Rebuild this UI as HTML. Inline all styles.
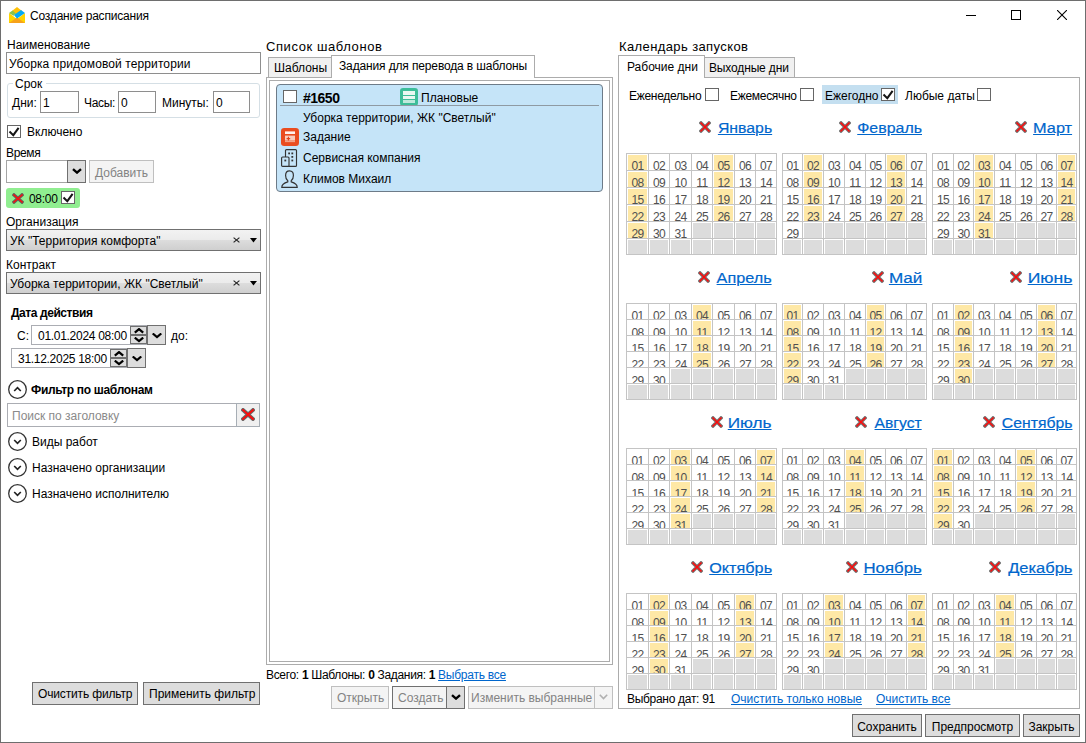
<!DOCTYPE html><html><head><meta charset="utf-8"><style>
*{margin:0;padding:0;box-sizing:border-box}
html,body{width:1086px;height:743px;overflow:hidden;background:#fff}
body{position:relative;font-family:"Liberation Sans",sans-serif;font-size:12px;color:#000}
.t{position:absolute;white-space:nowrap}
.b{position:absolute}
.ab{position:absolute}
.cb{position:absolute;width:14px;height:13px;border:1px solid #666;background:#fff}
.cb svg{position:absolute;left:-1px;top:-1px}
.lnk{color:#0066cc;text-decoration:underline}
.dis{color:#838383}
.bold{font-weight:bold}
.gbtn{position:absolute;background:#dddddd;border:1px solid #707070}
.dbtn{position:absolute;background:#f4f4f4;border:1px solid #bfbfbf}
.cal{position:absolute}
.dn{text-align:center;font-size:12px;line-height:14px;color:#505050;overflow:hidden;padding-top:5px;letter-spacing:-0.6px}
.mh{font-size:15.5px;line-height:17px;transform-origin:100% 50%;-webkit-text-stroke:0.2px #0066cc}
</style></head><body><div class="b" style="left:0px;top:0px;width:1086px;height:743px;border:1px solid #6e6e6e"></div>
<svg class="ab" style="left:9px;top:7px" width="16" height="16" viewBox="0 0 16 16">
<path d="M0 6 L8 12 L16 6 L16 16 L0 16 Z" fill="#ffd400"/>
<path d="M0 16 L8 10.5 L16 16 Z" fill="#f7a21b"/>
<path d="M3 4 L8 0 L13 4 L8 8 Z" fill="#ffc107"/>
<path d="M0 6 L3.5 3.5 L7 6.5 L4.5 8.8 Z" fill="#8bc34a"/>
<path d="M5 8 L12 3 L16 6 L8 11.5 Z" fill="#03a9f4"/>
</svg>
<div class="t " style="left:30px;top:9px;font-size:12px;line-height:14px;letter-spacing:-0.2px;">Создание расписания</div>
<div class="b" style="left:966px;top:15px;width:10px;height:1px;background:#000"></div>
<div class="b" style="left:1011px;top:10px;width:10px;height:10px;border:1px solid #000"></div>
<svg class="ab" style="left:1057px;top:10px" width="10" height="10" viewBox="0 0 10 10"><path d="M0 0 L10 10 M10 0 L0 10" stroke="#000" stroke-width="1.1"/></svg>
<div class="t " style="left:7px;top:38px;font-size:12px;line-height:14px;">Наименование</div>
<div class="b" style="left:6px;top:52px;width:255px;height:22px;border:1px solid #8e8e8e;background:#fff"></div>
<div class="t " style="left:9px;top:57px;font-size:12px;line-height:14px;letter-spacing:0.1px;">Уборка придомовой территории</div>
<div class="b" style="left:7px;top:83px;width:253px;height:35px;border:1px solid #d5dfe5;border-radius:3px"></div>
<div class="b" style="left:13px;top:81px;width:33px;height:4px;background:#fff"></div>
<div class="t " style="left:15px;top:77px;font-size:12px;line-height:14px;">Срок</div>
<div class="t " style="left:12px;top:96px;font-size:12px;line-height:14px;">Дни:</div>
<div class="b" style="left:40px;top:91px;width:39px;height:22px;border:1px solid #8e8e8e;background:#fff"></div>
<div class="t " style="left:43px;top:96px;font-size:12px;line-height:14px;">1</div>
<div class="t " style="left:84px;top:96px;font-size:12px;line-height:14px;letter-spacing:-0.3px;">Часы:</div>
<div class="b" style="left:118px;top:91px;width:38px;height:22px;border:1px solid #8e8e8e;background:#fff"></div>
<div class="t " style="left:121px;top:96px;font-size:12px;line-height:14px;">0</div>
<div class="t " style="left:162px;top:96px;font-size:12px;line-height:14px;">Минуты:</div>
<div class="b" style="left:213px;top:91px;width:37px;height:22px;border:1px solid #8e8e8e;background:#fff"></div>
<div class="t " style="left:216px;top:96px;font-size:12px;line-height:14px;">0</div>
<div class="cb" style="left:7px;top:125px"><svg width="14" height="13" viewBox="0 0 14 13"><path d="M2.5 6.6 L6.3 10.2 L11.6 2.8" fill="none" stroke="#151515" stroke-width="2"/></svg></div>
<div class="t " style="left:27px;top:125px;font-size:12px;line-height:14px;">Включено</div>
<div class="t " style="left:6px;top:146px;font-size:12px;line-height:14px;letter-spacing:-0.35px;">Время</div>
<div class="b" style="left:6px;top:160px;width:80px;height:23px;border:1px solid #a5a5a5;background:#fff"></div>
<div class="b" style="left:67px;top:160px;width:19px;height:23px;border:1px solid #707070;background:#dddddd"></div>
<svg class="ab" style="left:72px;top:168px" width="10" height="6" viewBox="0 0 10 6"><path d="M1 1.2 L5 4.6 L9 1.2" fill="none" stroke="#000" stroke-width="2.4"/></svg>
<div class="dbtn" style="left:89px;top:160px;width:65px;height:23px"></div>
<div class="t dis" style="left:95px;top:166px;font-size:12px;line-height:14px;">Добавить</div>
<div class="b" style="left:6px;top:188px;width:74px;height:20px;background:#90ee90;border-radius:3px"></div>
<svg class="ab" style="left:12px;top:193px" width="12" height="11" viewBox="0 0 12 11"><path d="M2 2 L10 9 M10 2 L2 9" stroke="#5a5a5a" stroke-width="3.5" stroke-linecap="square" opacity="0.9"/><path d="M2 2 L10 9 M10 2 L2 9" stroke="#ff0a0a" stroke-width="1.5" stroke-linecap="square"/></svg>
<div class="t " style="left:29px;top:192px;font-size:12px;line-height:14px;letter-spacing:-0.3px;">08:00</div>
<div class="cb" style="left:61px;top:191px"><svg width="14" height="13" viewBox="0 0 14 13"><path d="M2.5 6.6 L6.3 10.2 L11.6 2.8" fill="none" stroke="#151515" stroke-width="2"/></svg></div>
<div class="t " style="left:6px;top:215px;font-size:12px;line-height:14px;">Организация</div>
<div class="b" style="left:6px;top:229px;width:255px;height:22px;border:1px solid #707070;background:linear-gradient(#f2f2f2 0,#ebebeb 50%,#dddddd 50%,#cfcfcf 100%)"></div>
<div class="t " style="left:10px;top:234px;font-size:12px;line-height:14px;">УК "Территория комфорта"</div>
<svg class="ab" style="left:233px;top:237px" width="7" height="6" viewBox="0 0 7 6"><path d="M0.6 0.6 L6.4 5.4 M6.4 0.6 L0.6 5.4" stroke="#222" stroke-width="1.15"/></svg>
<svg class="ab" style="left:250px;top:238px" width="7" height="5" viewBox="0 0 7 5"><path d="M0 0 L7 0 L3.5 4.5 Z" fill="#000"/></svg>
<div class="t " style="left:6px;top:258px;font-size:12px;line-height:14px;">Контракт</div>
<div class="b" style="left:6px;top:272px;width:255px;height:22px;border:1px solid #707070;background:linear-gradient(#f2f2f2 0,#ebebeb 50%,#dddddd 50%,#cfcfcf 100%)"></div>
<div class="t " style="left:10px;top:277px;font-size:12px;line-height:14px;">Уборка территории, ЖК "Светлый"</div>
<svg class="ab" style="left:233px;top:280px" width="7" height="6" viewBox="0 0 7 6"><path d="M0.6 0.6 L6.4 5.4 M6.4 0.6 L0.6 5.4" stroke="#222" stroke-width="1.15"/></svg>
<svg class="ab" style="left:250px;top:281px" width="7" height="5" viewBox="0 0 7 5"><path d="M0 0 L7 0 L3.5 4.5 Z" fill="#000"/></svg>
<div class="t bold" style="left:11px;top:306px;font-size:12px;line-height:14px;letter-spacing:-0.43px;">Дата действия</div>
<div class="t " style="left:17px;top:329px;font-size:12px;line-height:14px;">С:</div>
<div class="b" style="left:31px;top:325px;width:135px;height:20px;border:1px solid #abadb3;background:#fff"></div>
<div class="t " style="left:38px;top:329px;font-size:12px;line-height:14px;letter-spacing:-0.29px;">01.01.2024 08:00</div>
<div class="b" style="left:130px;top:326px;width:17px;height:18px;border:1px solid #707070;background:#dddddd"></div>
<div class="b" style="left:130px;top:334px;width:17px;height:2px;background:#707070"></div>
<svg class="ab" style="left:133.5px;top:328px" width="10" height="6" viewBox="0 0 10 6"><path d="M0.8 4.6 L5 1.1 L9.2 4.6" fill="none" stroke="#000" stroke-width="2.2"/></svg>
<svg class="ab" style="left:133.5px;top:337px" width="10" height="6" viewBox="0 0 10 6"><path d="M0.8 0.6 L5 4.1 L9.2 0.6" fill="none" stroke="#000" stroke-width="2.2"/></svg>
<div class="b" style="left:147px;top:325px;width:19px;height:20px;border:1px solid #707070;background:#dddddd"></div>
<svg class="ab" style="left:151.5px;top:333px" width="10" height="6" viewBox="0 0 10 6"><path d="M0.7 0.5 L5 4.1 L9.3 0.5" fill="none" stroke="#000" stroke-width="2.2"/></svg>
<div class="t " style="left:171px;top:329px;font-size:12px;line-height:14px;">до:</div>
<div class="b" style="left:11px;top:348px;width:135px;height:20px;border:1px solid #abadb3;background:#fff"></div>
<div class="t " style="left:18px;top:352px;font-size:12px;line-height:14px;letter-spacing:-0.29px;">31.12.2025 18:00</div>
<div class="b" style="left:110px;top:349px;width:17px;height:18px;border:1px solid #707070;background:#dddddd"></div>
<div class="b" style="left:110px;top:357px;width:17px;height:2px;background:#707070"></div>
<svg class="ab" style="left:113.5px;top:351px" width="10" height="6" viewBox="0 0 10 6"><path d="M0.8 4.6 L5 1.1 L9.2 4.6" fill="none" stroke="#000" stroke-width="2.2"/></svg>
<svg class="ab" style="left:113.5px;top:360px" width="10" height="6" viewBox="0 0 10 6"><path d="M0.8 0.6 L5 4.1 L9.2 0.6" fill="none" stroke="#000" stroke-width="2.2"/></svg>
<div class="b" style="left:127px;top:348px;width:19px;height:20px;border:1px solid #707070;background:#dddddd"></div>
<svg class="ab" style="left:131.5px;top:356px" width="10" height="6" viewBox="0 0 10 6"><path d="M0.7 0.5 L5 4.1 L9.3 0.5" fill="none" stroke="#000" stroke-width="2.2"/></svg>
<svg class="ab" style="left:7px;top:379px" width="21" height="21" viewBox="0 0 21 21"><circle cx="10.5" cy="10.5" r="8.8" fill="none" stroke="#333" stroke-width="1.3"/><path d="M7.2 12 L10.5 8.7 L13.8 12" fill="none" stroke="#222" stroke-width="1.7"/></svg>
<div class="t bold" style="left:31px;top:383px;font-size:12px;line-height:14px;letter-spacing:-0.32px;">Фильтр по шаблонам</div>
<div class="b" style="left:7px;top:403px;width:253px;height:24px;border:1px solid #abadb3;background:#fff"></div>
<div class="t " style="left:12px;top:409px;font-size:12px;line-height:14px;color:#8a8a8a">Поиск по заголовку</div>
<div class="b" style="left:236px;top:403px;width:24px;height:24px;border:1px solid #a7aeb5;background:#f0f0f0"></div>
<svg class="ab" style="left:241px;top:408px" width="14" height="13" viewBox="0 0 14 13"><path d="M2 2 L12 11 M12 2 L2 11" stroke="#5a5a5a" stroke-width="3.7" stroke-linecap="square" opacity="0.9"/><path d="M2 2 L12 11 M12 2 L2 11" stroke="#ff0a0a" stroke-width="1.7" stroke-linecap="square"/></svg>
<svg class="ab" style="left:7px;top:431px" width="21" height="21" viewBox="0 0 21 21"><circle cx="10.5" cy="10.5" r="8.8" fill="none" stroke="#333" stroke-width="1.3"/><path d="M7.2 9 L10.5 12.3 L13.8 9" fill="none" stroke="#222" stroke-width="1.7"/></svg>
<div class="t " style="left:32px;top:435px;font-size:12px;line-height:14px;">Виды работ</div>
<svg class="ab" style="left:7px;top:457px" width="21" height="21" viewBox="0 0 21 21"><circle cx="10.5" cy="10.5" r="8.8" fill="none" stroke="#333" stroke-width="1.3"/><path d="M7.2 9 L10.5 12.3 L13.8 9" fill="none" stroke="#222" stroke-width="1.7"/></svg>
<div class="t " style="left:32px;top:461px;font-size:12px;line-height:14px;">Назначено организации</div>
<svg class="ab" style="left:7px;top:483px" width="21" height="21" viewBox="0 0 21 21"><circle cx="10.5" cy="10.5" r="8.8" fill="none" stroke="#333" stroke-width="1.3"/><path d="M7.2 9 L10.5 12.3 L13.8 9" fill="none" stroke="#222" stroke-width="1.7"/></svg>
<div class="t " style="left:32px;top:487px;font-size:12px;line-height:14px;">Назначено исполнителю</div>
<div class="gbtn" style="left:32px;top:682px;width:106px;height:23px"></div>
<div class="t " style="left:38px;top:687px;font-size:12px;line-height:14px;letter-spacing:-0.15px;">Очистить фильтр</div>
<div class="gbtn" style="left:143px;top:682px;width:117px;height:23px"></div>
<div class="t " style="left:149px;top:687px;font-size:12px;line-height:14px;">Применить фильтр</div>
<div class="t " style="left:266px;top:39px;font-size:13px;line-height:15px;letter-spacing:0.59px;">Список шаблонов</div>
<div class="b" style="left:266px;top:77px;width:347px;height:588px;border:1px solid #acacac;background:#fff"></div>
<div class="b" style="left:269px;top:80px;width:341px;height:582px;border:1px solid #acacac"></div>
<div class="b" style="left:268px;top:57px;width:64px;height:21px;border:1px solid #acacac;background:#f0f0f0"></div>
<div class="t " style="left:274px;top:61px;font-size:12px;line-height:14px;">Шаблоны</div>
<div class="b" style="left:331px;top:55px;width:204px;height:23px;border:1px solid #acacac;border-bottom:none;background:#fff"></div>
<div class="t " style="left:339px;top:59px;font-size:12px;line-height:14px;letter-spacing:-0.14px;">Задания для перевода в шаблоны</div>
<div class="b" style="left:276px;top:84px;width:327px;height:108px;border:1px solid #6d7b88;border-radius:4px;background:#c5e4f8"></div>
<div class="cb" style="left:283px;top:90px"></div>
<div class="t bold" style="left:303px;top:90px;font-size:14px;line-height:16px;letter-spacing:-0.5px;">#1650</div>
<svg class="ab" style="left:400px;top:88px" width="18" height="18" viewBox="0 0 18 18">
<rect x="0" y="0" width="18" height="18" rx="3" fill="#3dbd99"/>
<rect x="3" y="3" width="12" height="4" fill="#e9f7f2"/>
<rect x="3" y="8" width="12" height="3" fill="#e9f7f2"/>
<rect x="3" y="12" width="12" height="3" fill="#bfe9dc"/>
</svg>
<div class="t " style="left:421px;top:91px;font-size:12px;line-height:14px;">Плановые</div>
<div class="b" style="left:280px;top:105px;width:319px;height:1px;background:#8f9aa3"></div>
<div class="t " style="left:303px;top:111px;font-size:12px;line-height:14px;">Уборка территории, ЖК "Светлый"</div>
<svg class="ab" style="left:281px;top:128px" width="18" height="18" viewBox="0 0 18 18">
<rect x="0" y="0" width="18" height="18" rx="3.2" fill="#ea4c1f"/>
<rect x="4" y="3.4" width="10" height="2.6" fill="#fff3ee"/>
<rect x="4" y="7.6" width="10" height="5" fill="#f9cdbd"/>
<rect x="4" y="13.2" width="10" height="0.9" fill="#f6b9a2"/>
<path d="M5.6 10.6 H9.2 M7.4 8.8 V12.4" stroke="#e0401a" stroke-width="1.1"/>
</svg>
<div class="t " style="left:303px;top:130px;font-size:12px;line-height:14px;">Задание</div>
<svg class="ab" style="left:281px;top:149px" width="17" height="18" viewBox="0 0 17 18">
<rect x="4.5" y="0.6" width="11" height="16.8" rx="1" fill="none" stroke="#333" stroke-width="1.15"/>
<rect x="0.6" y="8" width="7.4" height="9.4" rx="1" fill="#c5e4f8" stroke="#333" stroke-width="1.15"/>
<rect x="7.2" y="3.5" width="1.8" height="1.8" fill="#333"/>
<rect x="10.4" y="3.5" width="1.8" height="1.8" fill="#333"/>
<rect x="10.4" y="7" width="1.8" height="1.8" fill="#333"/>
<rect x="10.4" y="10.6" width="1.8" height="1.8" fill="#333"/>
<rect x="3.4" y="10.6" width="1.8" height="1.8" fill="#333"/>
</svg>
<div class="t " style="left:303px;top:151px;font-size:12px;line-height:14px;">Сервисная компания</div>
<svg class="ab" style="left:281px;top:170px" width="17" height="18" viewBox="0 0 17 18" fill="none" stroke="#333" stroke-width="1.2">
<path d="M8.5 0.8 C5.6 0.8 4.6 3 4.6 5.4 C4.6 7.8 5.8 10 6.8 10.8 L6.8 11.8 C4 12.6 0.8 13.6 0.8 17.3 L16.2 17.3 C16.2 13.6 13 12.6 10.2 11.8 L10.2 10.8 C11.2 10 12.4 7.8 12.4 5.4 C12.4 3 11.4 0.8 8.5 0.8 Z"/>
</svg>
<div class="t " style="left:303px;top:172px;font-size:12px;line-height:14px;">Климов Михаил</div>
<div class="t " style="left:266px;top:668px;font-size:12px;line-height:14px;letter-spacing:-0.32px;">Всего: <b>1</b> Шаблоны: <b>0</b> Задания: <b>1</b> <span class="lnk" style="letter-spacing:-0.25px">Выбрать все</span></div>
<div class="dbtn" style="left:331px;top:686px;width:58px;height:23px"></div>
<div class="t dis" style="left:337px;top:691px;font-size:12px;line-height:14px;">Открыть</div>
<div class="b" style="left:392px;top:686px;width:73px;height:23px;border:1px solid #707070;background:#f4f4f4"></div>
<div class="t dis" style="left:398px;top:691px;font-size:12px;line-height:14px;">Создать</div>
<div class="b" style="left:446px;top:686px;width:19px;height:23px;border:1px solid #707070;background:#dddddd"></div>
<svg class="ab" style="left:451px;top:694px" width="10" height="6" viewBox="0 0 10 6"><path d="M1 1.2 L5 4.6 L9 1.2" fill="none" stroke="#000" stroke-width="2.4"/></svg>
<div class="dbtn" style="left:468px;top:686px;width:145px;height:23px"></div>
<div class="b" style="left:594px;top:687px;width:1px;height:21px;background:#bfbfbf"></div>
<div class="t dis" style="left:471px;top:691px;font-size:12px;line-height:14px;">Изменить выбранные</div>
<svg class="ab" style="left:599px;top:694px" width="9" height="6" viewBox="0 0 9 6"><path d="M0.8 0.8 L4.5 4.5 L8.2 0.8" fill="none" stroke="#b0b0b0" stroke-width="1.6"/></svg>
<div class="t " style="left:619px;top:39px;font-size:13px;line-height:15px;letter-spacing:0.39px;">Календарь запусков</div>
<div class="b" style="left:618px;top:77px;width:462px;height:632px;border:1px solid #acacac;background:#fff"></div>
<div class="b" style="left:704px;top:57px;width:91px;height:21px;border:1px solid #acacac;background:#f0f0f0"></div>
<div class="t " style="left:709px;top:61px;font-size:12px;line-height:14px;letter-spacing:-0.15px;">Выходные дни</div>
<div class="b" style="left:618px;top:55px;width:87px;height:23px;border:1px solid #acacac;border-bottom:none;background:#fff"></div>
<div class="t " style="left:627px;top:60px;font-size:12px;line-height:14px;">Рабочие дни</div>
<div class="t " style="left:629px;top:89px;font-size:12px;line-height:14px;letter-spacing:-0.3px;">Еженедельно</div>
<div class="cb" style="left:705px;top:88px"></div>
<div class="t " style="left:730px;top:89px;font-size:12px;line-height:14px;letter-spacing:-0.3px;">Ежемесячно</div>
<div class="cb" style="left:800px;top:88px"></div>
<div class="b" style="left:822px;top:85px;width:76px;height:19px;background:#c4dff0"></div>
<div class="t " style="left:825px;top:89px;font-size:12px;line-height:14px;">Ежегодно</div>
<div class="cb" style="left:881px;top:88px"><svg width="14" height="13" viewBox="0 0 14 13"><path d="M2.5 6.6 L6.3 10.2 L11.6 2.8" fill="none" stroke="#151515" stroke-width="2"/></svg></div>
<div class="t " style="left:905px;top:89px;font-size:12px;line-height:14px;">Любые даты</div>
<div class="cb" style="left:977px;top:88px"></div>
<div class="t mh" style="right:314px;top:119px;transform:scaleX(1.021)"><span class="lnk">Январь</span></div>
<svg class="ab" style="left:699.1px;top:121px" width="12" height="12" viewBox="0 0 12 12"><path d="M2 2 L10 10 M10 2 L2 10" stroke="#666" stroke-width="3.4" stroke-linecap="square" opacity="0.9"/><path d="M2 2 L10 10 M10 2 L2 10" stroke="#ff0a0a" stroke-width="1.5" stroke-linecap="square"/></svg>
<div class="cal" style="left:626px;top:153px;width:151px;height:102px"><div class="b" style="left:2px;top:2px;width:19px;height:15px;background:#fee8a6"></div><div class="t dn" style="left:1px;top:1px;width:21px;height:16px;padding-top:5px">01</div><div class="t dn" style="left:23px;top:1px;width:20px;height:16px;padding-top:5px">02</div><div class="t dn" style="left:44px;top:1px;width:21px;height:16px;padding-top:5px">03</div><div class="t dn" style="left:66px;top:1px;width:20px;height:16px;padding-top:5px">04</div><div class="b" style="left:88px;top:2px;width:19px;height:15px;background:#fee8a6"></div><div class="t dn" style="left:87px;top:1px;width:21px;height:16px;padding-top:5px">05</div><div class="t dn" style="left:109px;top:1px;width:20px;height:16px;padding-top:5px">06</div><div class="t dn" style="left:130px;top:1px;width:20px;height:16px;padding-top:5px">07</div><div class="b" style="left:2px;top:19px;width:19px;height:15px;background:#fee8a6"></div><div class="t dn" style="left:1px;top:18px;width:21px;height:16px;padding-top:5px">08</div><div class="t dn" style="left:23px;top:18px;width:20px;height:16px;padding-top:5px">09</div><div class="t dn" style="left:44px;top:18px;width:21px;height:16px;padding-top:5px">10</div><div class="t dn" style="left:66px;top:18px;width:20px;height:16px;padding-top:5px">11</div><div class="b" style="left:88px;top:19px;width:19px;height:15px;background:#fee8a6"></div><div class="t dn" style="left:87px;top:18px;width:21px;height:16px;padding-top:5px">12</div><div class="t dn" style="left:109px;top:18px;width:20px;height:16px;padding-top:5px">13</div><div class="t dn" style="left:130px;top:18px;width:20px;height:16px;padding-top:5px">14</div><div class="b" style="left:2px;top:36px;width:19px;height:15px;background:#fee8a6"></div><div class="t dn" style="left:1px;top:35px;width:21px;height:16px;padding-top:5px">15</div><div class="t dn" style="left:23px;top:35px;width:20px;height:16px;padding-top:5px">16</div><div class="t dn" style="left:44px;top:35px;width:21px;height:16px;padding-top:5px">17</div><div class="t dn" style="left:66px;top:35px;width:20px;height:16px;padding-top:5px">18</div><div class="b" style="left:88px;top:36px;width:19px;height:15px;background:#fee8a6"></div><div class="t dn" style="left:87px;top:35px;width:21px;height:16px;padding-top:5px">19</div><div class="t dn" style="left:109px;top:35px;width:20px;height:16px;padding-top:5px">20</div><div class="t dn" style="left:130px;top:35px;width:20px;height:16px;padding-top:5px">21</div><div class="b" style="left:2px;top:53px;width:19px;height:15px;background:#fee8a6"></div><div class="t dn" style="left:1px;top:52px;width:21px;height:16px;padding-top:5px">22</div><div class="t dn" style="left:23px;top:52px;width:20px;height:16px;padding-top:5px">23</div><div class="t dn" style="left:44px;top:52px;width:21px;height:16px;padding-top:5px">24</div><div class="t dn" style="left:66px;top:52px;width:20px;height:16px;padding-top:5px">25</div><div class="b" style="left:88px;top:53px;width:19px;height:15px;background:#fee8a6"></div><div class="t dn" style="left:87px;top:52px;width:21px;height:16px;padding-top:5px">26</div><div class="t dn" style="left:109px;top:52px;width:20px;height:16px;padding-top:5px">27</div><div class="t dn" style="left:130px;top:52px;width:20px;height:16px;padding-top:5px">28</div><div class="b" style="left:2px;top:70px;width:19px;height:15px;background:#fee8a6"></div><div class="t dn" style="left:1px;top:69px;width:21px;height:16px;padding-top:5px">29</div><div class="t dn" style="left:23px;top:69px;width:20px;height:16px;padding-top:5px">30</div><div class="t dn" style="left:44px;top:69px;width:21px;height:16px;padding-top:5px">31</div><div class="b" style="left:67px;top:70px;width:18px;height:15px;background:#dcdcdc"></div><div class="b" style="left:88px;top:70px;width:19px;height:15px;background:#dcdcdc"></div><div class="b" style="left:110px;top:70px;width:18px;height:15px;background:#dcdcdc"></div><div class="b" style="left:131px;top:70px;width:18px;height:15px;background:#dcdcdc"></div><div class="b" style="left:2px;top:87px;width:19px;height:14px;background:#dcdcdc"></div><div class="b" style="left:24px;top:87px;width:18px;height:14px;background:#dcdcdc"></div><div class="b" style="left:45px;top:87px;width:19px;height:14px;background:#dcdcdc"></div><div class="b" style="left:67px;top:87px;width:18px;height:14px;background:#dcdcdc"></div><div class="b" style="left:88px;top:87px;width:19px;height:14px;background:#dcdcdc"></div><div class="b" style="left:110px;top:87px;width:18px;height:14px;background:#dcdcdc"></div><div class="b" style="left:131px;top:87px;width:18px;height:14px;background:#dcdcdc"></div><div class="b" style="left:0px;top:0;width:1px;height:102px;background:#c4c4c4"></div><div class="b" style="left:22px;top:0;width:1px;height:102px;background:#c4c4c4"></div><div class="b" style="left:43px;top:0;width:1px;height:102px;background:#c4c4c4"></div><div class="b" style="left:65px;top:0;width:1px;height:102px;background:#c4c4c4"></div><div class="b" style="left:86px;top:0;width:1px;height:102px;background:#c4c4c4"></div><div class="b" style="left:108px;top:0;width:1px;height:102px;background:#c4c4c4"></div><div class="b" style="left:129px;top:0;width:1px;height:102px;background:#c4c4c4"></div><div class="b" style="left:150px;top:0;width:1px;height:102px;background:#c4c4c4"></div><div class="b" style="left:0;top:0px;width:151px;height:1px;background:#c4c4c4"></div><div class="b" style="left:0;top:17px;width:151px;height:1px;background:#c4c4c4"></div><div class="b" style="left:0;top:34px;width:151px;height:1px;background:#c4c4c4"></div><div class="b" style="left:0;top:51px;width:151px;height:1px;background:#c4c4c4"></div><div class="b" style="left:0;top:68px;width:151px;height:1px;background:#c4c4c4"></div><div class="b" style="left:0;top:85px;width:151px;height:1px;background:#c4c4c4"></div><div class="b" style="left:0;top:101px;width:151px;height:1px;background:#c4c4c4"></div></div>
<div class="t mh" style="right:164px;top:119px;transform:scaleX(1.028)"><span class="lnk">Февраль</span></div>
<svg class="ab" style="left:838.6px;top:121px" width="12" height="12" viewBox="0 0 12 12"><path d="M2 2 L10 10 M10 2 L2 10" stroke="#666" stroke-width="3.4" stroke-linecap="square" opacity="0.9"/><path d="M2 2 L10 10 M10 2 L2 10" stroke="#ff0a0a" stroke-width="1.5" stroke-linecap="square"/></svg>
<div class="cal" style="left:782px;top:153px;width:145px;height:102px"><div class="t dn" style="left:1px;top:1px;width:19px;height:16px;padding-top:5px">01</div><div class="b" style="left:22px;top:2px;width:18px;height:15px;background:#fee8a6"></div><div class="t dn" style="left:21px;top:1px;width:20px;height:16px;padding-top:5px">02</div><div class="t dn" style="left:42px;top:1px;width:20px;height:16px;padding-top:5px">03</div><div class="t dn" style="left:63px;top:1px;width:20px;height:16px;padding-top:5px">04</div><div class="t dn" style="left:84px;top:1px;width:19px;height:16px;padding-top:5px">05</div><div class="b" style="left:105px;top:2px;width:18px;height:15px;background:#fee8a6"></div><div class="t dn" style="left:104px;top:1px;width:20px;height:16px;padding-top:5px">06</div><div class="t dn" style="left:125px;top:1px;width:19px;height:16px;padding-top:5px">07</div><div class="t dn" style="left:1px;top:18px;width:19px;height:16px;padding-top:5px">08</div><div class="b" style="left:22px;top:19px;width:18px;height:15px;background:#fee8a6"></div><div class="t dn" style="left:21px;top:18px;width:20px;height:16px;padding-top:5px">09</div><div class="t dn" style="left:42px;top:18px;width:20px;height:16px;padding-top:5px">10</div><div class="t dn" style="left:63px;top:18px;width:20px;height:16px;padding-top:5px">11</div><div class="t dn" style="left:84px;top:18px;width:19px;height:16px;padding-top:5px">12</div><div class="b" style="left:105px;top:19px;width:18px;height:15px;background:#fee8a6"></div><div class="t dn" style="left:104px;top:18px;width:20px;height:16px;padding-top:5px">13</div><div class="t dn" style="left:125px;top:18px;width:19px;height:16px;padding-top:5px">14</div><div class="t dn" style="left:1px;top:35px;width:19px;height:16px;padding-top:5px">15</div><div class="b" style="left:22px;top:36px;width:18px;height:15px;background:#fee8a6"></div><div class="t dn" style="left:21px;top:35px;width:20px;height:16px;padding-top:5px">16</div><div class="t dn" style="left:42px;top:35px;width:20px;height:16px;padding-top:5px">17</div><div class="t dn" style="left:63px;top:35px;width:20px;height:16px;padding-top:5px">18</div><div class="t dn" style="left:84px;top:35px;width:19px;height:16px;padding-top:5px">19</div><div class="b" style="left:105px;top:36px;width:18px;height:15px;background:#fee8a6"></div><div class="t dn" style="left:104px;top:35px;width:20px;height:16px;padding-top:5px">20</div><div class="t dn" style="left:125px;top:35px;width:19px;height:16px;padding-top:5px">21</div><div class="t dn" style="left:1px;top:52px;width:19px;height:16px;padding-top:5px">22</div><div class="b" style="left:22px;top:53px;width:18px;height:15px;background:#fee8a6"></div><div class="t dn" style="left:21px;top:52px;width:20px;height:16px;padding-top:5px">23</div><div class="t dn" style="left:42px;top:52px;width:20px;height:16px;padding-top:5px">24</div><div class="t dn" style="left:63px;top:52px;width:20px;height:16px;padding-top:5px">25</div><div class="t dn" style="left:84px;top:52px;width:19px;height:16px;padding-top:5px">26</div><div class="b" style="left:105px;top:53px;width:18px;height:15px;background:#fee8a6"></div><div class="t dn" style="left:104px;top:52px;width:20px;height:16px;padding-top:5px">27</div><div class="t dn" style="left:125px;top:52px;width:19px;height:16px;padding-top:5px">28</div><div class="t dn" style="left:1px;top:69px;width:19px;height:16px;padding-top:5px">29</div><div class="b" style="left:22px;top:70px;width:18px;height:15px;background:#dcdcdc"></div><div class="b" style="left:43px;top:70px;width:18px;height:15px;background:#dcdcdc"></div><div class="b" style="left:64px;top:70px;width:18px;height:15px;background:#dcdcdc"></div><div class="b" style="left:85px;top:70px;width:17px;height:15px;background:#dcdcdc"></div><div class="b" style="left:105px;top:70px;width:18px;height:15px;background:#dcdcdc"></div><div class="b" style="left:126px;top:70px;width:17px;height:15px;background:#dcdcdc"></div><div class="b" style="left:2px;top:87px;width:17px;height:14px;background:#dcdcdc"></div><div class="b" style="left:22px;top:87px;width:18px;height:14px;background:#dcdcdc"></div><div class="b" style="left:43px;top:87px;width:18px;height:14px;background:#dcdcdc"></div><div class="b" style="left:64px;top:87px;width:18px;height:14px;background:#dcdcdc"></div><div class="b" style="left:85px;top:87px;width:17px;height:14px;background:#dcdcdc"></div><div class="b" style="left:105px;top:87px;width:18px;height:14px;background:#dcdcdc"></div><div class="b" style="left:126px;top:87px;width:17px;height:14px;background:#dcdcdc"></div><div class="b" style="left:0px;top:0;width:1px;height:102px;background:#c4c4c4"></div><div class="b" style="left:20px;top:0;width:1px;height:102px;background:#c4c4c4"></div><div class="b" style="left:41px;top:0;width:1px;height:102px;background:#c4c4c4"></div><div class="b" style="left:62px;top:0;width:1px;height:102px;background:#c4c4c4"></div><div class="b" style="left:83px;top:0;width:1px;height:102px;background:#c4c4c4"></div><div class="b" style="left:103px;top:0;width:1px;height:102px;background:#c4c4c4"></div><div class="b" style="left:124px;top:0;width:1px;height:102px;background:#c4c4c4"></div><div class="b" style="left:144px;top:0;width:1px;height:102px;background:#c4c4c4"></div><div class="b" style="left:0;top:0px;width:145px;height:1px;background:#c4c4c4"></div><div class="b" style="left:0;top:17px;width:145px;height:1px;background:#c4c4c4"></div><div class="b" style="left:0;top:34px;width:145px;height:1px;background:#c4c4c4"></div><div class="b" style="left:0;top:51px;width:145px;height:1px;background:#c4c4c4"></div><div class="b" style="left:0;top:68px;width:145px;height:1px;background:#c4c4c4"></div><div class="b" style="left:0;top:85px;width:145px;height:1px;background:#c4c4c4"></div><div class="b" style="left:0;top:101px;width:145px;height:1px;background:#c4c4c4"></div></div>
<div class="t mh" style="right:14px;top:119px;transform:scaleX(1.052)"><span class="lnk">Март</span></div>
<svg class="ab" style="left:1014.5px;top:121px" width="12" height="12" viewBox="0 0 12 12"><path d="M2 2 L10 10 M10 2 L2 10" stroke="#666" stroke-width="3.4" stroke-linecap="square" opacity="0.9"/><path d="M2 2 L10 10 M10 2 L2 10" stroke="#ff0a0a" stroke-width="1.5" stroke-linecap="square"/></svg>
<div class="cal" style="left:932px;top:153px;width:145px;height:102px"><div class="t dn" style="left:1px;top:1px;width:20px;height:16px;padding-top:5px">01</div><div class="t dn" style="left:22px;top:1px;width:19px;height:16px;padding-top:5px">02</div><div class="b" style="left:43px;top:2px;width:18px;height:15px;background:#fee8a6"></div><div class="t dn" style="left:42px;top:1px;width:20px;height:16px;padding-top:5px">03</div><div class="t dn" style="left:63px;top:1px;width:20px;height:16px;padding-top:5px">04</div><div class="t dn" style="left:84px;top:1px;width:20px;height:16px;padding-top:5px">05</div><div class="t dn" style="left:105px;top:1px;width:19px;height:16px;padding-top:5px">06</div><div class="b" style="left:126px;top:2px;width:17px;height:15px;background:#fee8a6"></div><div class="t dn" style="left:125px;top:1px;width:19px;height:16px;padding-top:5px">07</div><div class="t dn" style="left:1px;top:18px;width:20px;height:16px;padding-top:5px">08</div><div class="t dn" style="left:22px;top:18px;width:19px;height:16px;padding-top:5px">09</div><div class="b" style="left:43px;top:19px;width:18px;height:15px;background:#fee8a6"></div><div class="t dn" style="left:42px;top:18px;width:20px;height:16px;padding-top:5px">10</div><div class="t dn" style="left:63px;top:18px;width:20px;height:16px;padding-top:5px">11</div><div class="t dn" style="left:84px;top:18px;width:20px;height:16px;padding-top:5px">12</div><div class="t dn" style="left:105px;top:18px;width:19px;height:16px;padding-top:5px">13</div><div class="b" style="left:126px;top:19px;width:17px;height:15px;background:#fee8a6"></div><div class="t dn" style="left:125px;top:18px;width:19px;height:16px;padding-top:5px">14</div><div class="t dn" style="left:1px;top:35px;width:20px;height:16px;padding-top:5px">15</div><div class="t dn" style="left:22px;top:35px;width:19px;height:16px;padding-top:5px">16</div><div class="b" style="left:43px;top:36px;width:18px;height:15px;background:#fee8a6"></div><div class="t dn" style="left:42px;top:35px;width:20px;height:16px;padding-top:5px">17</div><div class="t dn" style="left:63px;top:35px;width:20px;height:16px;padding-top:5px">18</div><div class="t dn" style="left:84px;top:35px;width:20px;height:16px;padding-top:5px">19</div><div class="t dn" style="left:105px;top:35px;width:19px;height:16px;padding-top:5px">20</div><div class="b" style="left:126px;top:36px;width:17px;height:15px;background:#fee8a6"></div><div class="t dn" style="left:125px;top:35px;width:19px;height:16px;padding-top:5px">21</div><div class="t dn" style="left:1px;top:52px;width:20px;height:16px;padding-top:5px">22</div><div class="t dn" style="left:22px;top:52px;width:19px;height:16px;padding-top:5px">23</div><div class="b" style="left:43px;top:53px;width:18px;height:15px;background:#fee8a6"></div><div class="t dn" style="left:42px;top:52px;width:20px;height:16px;padding-top:5px">24</div><div class="t dn" style="left:63px;top:52px;width:20px;height:16px;padding-top:5px">25</div><div class="t dn" style="left:84px;top:52px;width:20px;height:16px;padding-top:5px">26</div><div class="t dn" style="left:105px;top:52px;width:19px;height:16px;padding-top:5px">27</div><div class="b" style="left:126px;top:53px;width:17px;height:15px;background:#fee8a6"></div><div class="t dn" style="left:125px;top:52px;width:19px;height:16px;padding-top:5px">28</div><div class="t dn" style="left:1px;top:69px;width:20px;height:16px;padding-top:5px">29</div><div class="t dn" style="left:22px;top:69px;width:19px;height:16px;padding-top:5px">30</div><div class="b" style="left:43px;top:70px;width:18px;height:15px;background:#fee8a6"></div><div class="t dn" style="left:42px;top:69px;width:20px;height:16px;padding-top:5px">31</div><div class="b" style="left:64px;top:70px;width:18px;height:15px;background:#dcdcdc"></div><div class="b" style="left:85px;top:70px;width:18px;height:15px;background:#dcdcdc"></div><div class="b" style="left:106px;top:70px;width:17px;height:15px;background:#dcdcdc"></div><div class="b" style="left:126px;top:70px;width:17px;height:15px;background:#dcdcdc"></div><div class="b" style="left:2px;top:87px;width:18px;height:14px;background:#dcdcdc"></div><div class="b" style="left:23px;top:87px;width:17px;height:14px;background:#dcdcdc"></div><div class="b" style="left:43px;top:87px;width:18px;height:14px;background:#dcdcdc"></div><div class="b" style="left:64px;top:87px;width:18px;height:14px;background:#dcdcdc"></div><div class="b" style="left:85px;top:87px;width:18px;height:14px;background:#dcdcdc"></div><div class="b" style="left:106px;top:87px;width:17px;height:14px;background:#dcdcdc"></div><div class="b" style="left:126px;top:87px;width:17px;height:14px;background:#dcdcdc"></div><div class="b" style="left:0px;top:0;width:1px;height:102px;background:#c4c4c4"></div><div class="b" style="left:21px;top:0;width:1px;height:102px;background:#c4c4c4"></div><div class="b" style="left:41px;top:0;width:1px;height:102px;background:#c4c4c4"></div><div class="b" style="left:62px;top:0;width:1px;height:102px;background:#c4c4c4"></div><div class="b" style="left:83px;top:0;width:1px;height:102px;background:#c4c4c4"></div><div class="b" style="left:104px;top:0;width:1px;height:102px;background:#c4c4c4"></div><div class="b" style="left:124px;top:0;width:1px;height:102px;background:#c4c4c4"></div><div class="b" style="left:144px;top:0;width:1px;height:102px;background:#c4c4c4"></div><div class="b" style="left:0;top:0px;width:145px;height:1px;background:#c4c4c4"></div><div class="b" style="left:0;top:17px;width:145px;height:1px;background:#c4c4c4"></div><div class="b" style="left:0;top:34px;width:145px;height:1px;background:#c4c4c4"></div><div class="b" style="left:0;top:51px;width:145px;height:1px;background:#c4c4c4"></div><div class="b" style="left:0;top:68px;width:145px;height:1px;background:#c4c4c4"></div><div class="b" style="left:0;top:85px;width:145px;height:1px;background:#c4c4c4"></div><div class="b" style="left:0;top:101px;width:145px;height:1px;background:#c4c4c4"></div></div>
<div class="t mh" style="right:314px;top:269px;transform:scaleX(1.046)"><span class="lnk">Апрель</span></div>
<svg class="ab" style="left:698.3px;top:271px" width="12" height="12" viewBox="0 0 12 12"><path d="M2 2 L10 10 M10 2 L2 10" stroke="#666" stroke-width="3.4" stroke-linecap="square" opacity="0.9"/><path d="M2 2 L10 10 M10 2 L2 10" stroke="#ff0a0a" stroke-width="1.5" stroke-linecap="square"/></svg>
<div class="cal" style="left:626px;top:303px;width:151px;height:97px"><div class="t dn" style="left:1px;top:1px;width:21px;height:15px;padding-top:5px">01</div><div class="t dn" style="left:23px;top:1px;width:20px;height:15px;padding-top:5px">02</div><div class="t dn" style="left:44px;top:1px;width:21px;height:15px;padding-top:5px">03</div><div class="b" style="left:67px;top:2px;width:18px;height:14px;background:#fee8a6"></div><div class="t dn" style="left:66px;top:1px;width:20px;height:15px;padding-top:5px">04</div><div class="t dn" style="left:87px;top:1px;width:21px;height:15px;padding-top:5px">05</div><div class="t dn" style="left:109px;top:1px;width:20px;height:15px;padding-top:5px">06</div><div class="t dn" style="left:130px;top:1px;width:20px;height:15px;padding-top:5px">07</div><div class="t dn" style="left:1px;top:17px;width:21px;height:15px;padding-top:6px">08</div><div class="t dn" style="left:23px;top:17px;width:20px;height:15px;padding-top:6px">09</div><div class="t dn" style="left:44px;top:17px;width:21px;height:15px;padding-top:6px">10</div><div class="b" style="left:67px;top:18px;width:18px;height:14px;background:#fee8a6"></div><div class="t dn" style="left:66px;top:17px;width:20px;height:15px;padding-top:6px">11</div><div class="t dn" style="left:87px;top:17px;width:21px;height:15px;padding-top:6px">12</div><div class="t dn" style="left:109px;top:17px;width:20px;height:15px;padding-top:6px">13</div><div class="t dn" style="left:130px;top:17px;width:20px;height:15px;padding-top:6px">14</div><div class="t dn" style="left:1px;top:33px;width:21px;height:15px;padding-top:6px">15</div><div class="t dn" style="left:23px;top:33px;width:20px;height:15px;padding-top:6px">16</div><div class="t dn" style="left:44px;top:33px;width:21px;height:15px;padding-top:6px">17</div><div class="b" style="left:67px;top:34px;width:18px;height:14px;background:#fee8a6"></div><div class="t dn" style="left:66px;top:33px;width:20px;height:15px;padding-top:6px">18</div><div class="t dn" style="left:87px;top:33px;width:21px;height:15px;padding-top:6px">19</div><div class="t dn" style="left:109px;top:33px;width:20px;height:15px;padding-top:6px">20</div><div class="t dn" style="left:130px;top:33px;width:20px;height:15px;padding-top:6px">21</div><div class="t dn" style="left:1px;top:49px;width:21px;height:15px;padding-top:6px">22</div><div class="t dn" style="left:23px;top:49px;width:20px;height:15px;padding-top:6px">23</div><div class="t dn" style="left:44px;top:49px;width:21px;height:15px;padding-top:6px">24</div><div class="b" style="left:67px;top:50px;width:18px;height:14px;background:#fee8a6"></div><div class="t dn" style="left:66px;top:49px;width:20px;height:15px;padding-top:6px">25</div><div class="t dn" style="left:87px;top:49px;width:21px;height:15px;padding-top:6px">26</div><div class="t dn" style="left:109px;top:49px;width:20px;height:15px;padding-top:6px">27</div><div class="t dn" style="left:130px;top:49px;width:20px;height:15px;padding-top:6px">28</div><div class="t dn" style="left:1px;top:65px;width:21px;height:15px;padding-top:6px">29</div><div class="t dn" style="left:23px;top:65px;width:20px;height:15px;padding-top:6px">30</div><div class="b" style="left:45px;top:66px;width:19px;height:14px;background:#dcdcdc"></div><div class="b" style="left:67px;top:66px;width:18px;height:14px;background:#dcdcdc"></div><div class="b" style="left:88px;top:66px;width:19px;height:14px;background:#dcdcdc"></div><div class="b" style="left:110px;top:66px;width:18px;height:14px;background:#dcdcdc"></div><div class="b" style="left:131px;top:66px;width:18px;height:14px;background:#dcdcdc"></div><div class="b" style="left:2px;top:82px;width:19px;height:14px;background:#dcdcdc"></div><div class="b" style="left:24px;top:82px;width:18px;height:14px;background:#dcdcdc"></div><div class="b" style="left:45px;top:82px;width:19px;height:14px;background:#dcdcdc"></div><div class="b" style="left:67px;top:82px;width:18px;height:14px;background:#dcdcdc"></div><div class="b" style="left:88px;top:82px;width:19px;height:14px;background:#dcdcdc"></div><div class="b" style="left:110px;top:82px;width:18px;height:14px;background:#dcdcdc"></div><div class="b" style="left:131px;top:82px;width:18px;height:14px;background:#dcdcdc"></div><div class="b" style="left:0px;top:0;width:1px;height:97px;background:#c4c4c4"></div><div class="b" style="left:22px;top:0;width:1px;height:97px;background:#c4c4c4"></div><div class="b" style="left:43px;top:0;width:1px;height:97px;background:#c4c4c4"></div><div class="b" style="left:65px;top:0;width:1px;height:97px;background:#c4c4c4"></div><div class="b" style="left:86px;top:0;width:1px;height:97px;background:#c4c4c4"></div><div class="b" style="left:108px;top:0;width:1px;height:97px;background:#c4c4c4"></div><div class="b" style="left:129px;top:0;width:1px;height:97px;background:#c4c4c4"></div><div class="b" style="left:150px;top:0;width:1px;height:97px;background:#c4c4c4"></div><div class="b" style="left:0;top:0px;width:151px;height:1px;background:#c4c4c4"></div><div class="b" style="left:0;top:16px;width:151px;height:1px;background:#c4c4c4"></div><div class="b" style="left:0;top:32px;width:151px;height:1px;background:#c4c4c4"></div><div class="b" style="left:0;top:48px;width:151px;height:1px;background:#c4c4c4"></div><div class="b" style="left:0;top:64px;width:151px;height:1px;background:#c4c4c4"></div><div class="b" style="left:0;top:80px;width:151px;height:1px;background:#c4c4c4"></div><div class="b" style="left:0;top:96px;width:151px;height:1px;background:#c4c4c4"></div></div>
<div class="t mh" style="right:164px;top:269px;transform:scaleX(1.102)"><span class="lnk">Май</span></div>
<svg class="ab" style="left:871.8px;top:271px" width="12" height="12" viewBox="0 0 12 12"><path d="M2 2 L10 10 M10 2 L2 10" stroke="#666" stroke-width="3.4" stroke-linecap="square" opacity="0.9"/><path d="M2 2 L10 10 M10 2 L2 10" stroke="#ff0a0a" stroke-width="1.5" stroke-linecap="square"/></svg>
<div class="cal" style="left:782px;top:303px;width:145px;height:97px"><div class="b" style="left:2px;top:2px;width:17px;height:14px;background:#fee8a6"></div><div class="t dn" style="left:1px;top:1px;width:19px;height:15px;padding-top:5px">01</div><div class="t dn" style="left:21px;top:1px;width:20px;height:15px;padding-top:5px">02</div><div class="t dn" style="left:42px;top:1px;width:20px;height:15px;padding-top:5px">03</div><div class="t dn" style="left:63px;top:1px;width:20px;height:15px;padding-top:5px">04</div><div class="b" style="left:85px;top:2px;width:17px;height:14px;background:#fee8a6"></div><div class="t dn" style="left:84px;top:1px;width:19px;height:15px;padding-top:5px">05</div><div class="t dn" style="left:104px;top:1px;width:20px;height:15px;padding-top:5px">06</div><div class="t dn" style="left:125px;top:1px;width:19px;height:15px;padding-top:5px">07</div><div class="b" style="left:2px;top:18px;width:17px;height:14px;background:#fee8a6"></div><div class="t dn" style="left:1px;top:17px;width:19px;height:15px;padding-top:6px">08</div><div class="t dn" style="left:21px;top:17px;width:20px;height:15px;padding-top:6px">09</div><div class="t dn" style="left:42px;top:17px;width:20px;height:15px;padding-top:6px">10</div><div class="t dn" style="left:63px;top:17px;width:20px;height:15px;padding-top:6px">11</div><div class="b" style="left:85px;top:18px;width:17px;height:14px;background:#fee8a6"></div><div class="t dn" style="left:84px;top:17px;width:19px;height:15px;padding-top:6px">12</div><div class="t dn" style="left:104px;top:17px;width:20px;height:15px;padding-top:6px">13</div><div class="t dn" style="left:125px;top:17px;width:19px;height:15px;padding-top:6px">14</div><div class="b" style="left:2px;top:34px;width:17px;height:14px;background:#fee8a6"></div><div class="t dn" style="left:1px;top:33px;width:19px;height:15px;padding-top:6px">15</div><div class="t dn" style="left:21px;top:33px;width:20px;height:15px;padding-top:6px">16</div><div class="t dn" style="left:42px;top:33px;width:20px;height:15px;padding-top:6px">17</div><div class="t dn" style="left:63px;top:33px;width:20px;height:15px;padding-top:6px">18</div><div class="b" style="left:85px;top:34px;width:17px;height:14px;background:#fee8a6"></div><div class="t dn" style="left:84px;top:33px;width:19px;height:15px;padding-top:6px">19</div><div class="t dn" style="left:104px;top:33px;width:20px;height:15px;padding-top:6px">20</div><div class="t dn" style="left:125px;top:33px;width:19px;height:15px;padding-top:6px">21</div><div class="b" style="left:2px;top:50px;width:17px;height:14px;background:#fee8a6"></div><div class="t dn" style="left:1px;top:49px;width:19px;height:15px;padding-top:6px">22</div><div class="t dn" style="left:21px;top:49px;width:20px;height:15px;padding-top:6px">23</div><div class="t dn" style="left:42px;top:49px;width:20px;height:15px;padding-top:6px">24</div><div class="t dn" style="left:63px;top:49px;width:20px;height:15px;padding-top:6px">25</div><div class="b" style="left:85px;top:50px;width:17px;height:14px;background:#fee8a6"></div><div class="t dn" style="left:84px;top:49px;width:19px;height:15px;padding-top:6px">26</div><div class="t dn" style="left:104px;top:49px;width:20px;height:15px;padding-top:6px">27</div><div class="t dn" style="left:125px;top:49px;width:19px;height:15px;padding-top:6px">28</div><div class="b" style="left:2px;top:66px;width:17px;height:14px;background:#fee8a6"></div><div class="t dn" style="left:1px;top:65px;width:19px;height:15px;padding-top:6px">29</div><div class="t dn" style="left:21px;top:65px;width:20px;height:15px;padding-top:6px">30</div><div class="t dn" style="left:42px;top:65px;width:20px;height:15px;padding-top:6px">31</div><div class="b" style="left:64px;top:66px;width:18px;height:14px;background:#dcdcdc"></div><div class="b" style="left:85px;top:66px;width:17px;height:14px;background:#dcdcdc"></div><div class="b" style="left:105px;top:66px;width:18px;height:14px;background:#dcdcdc"></div><div class="b" style="left:126px;top:66px;width:17px;height:14px;background:#dcdcdc"></div><div class="b" style="left:2px;top:82px;width:17px;height:14px;background:#dcdcdc"></div><div class="b" style="left:22px;top:82px;width:18px;height:14px;background:#dcdcdc"></div><div class="b" style="left:43px;top:82px;width:18px;height:14px;background:#dcdcdc"></div><div class="b" style="left:64px;top:82px;width:18px;height:14px;background:#dcdcdc"></div><div class="b" style="left:85px;top:82px;width:17px;height:14px;background:#dcdcdc"></div><div class="b" style="left:105px;top:82px;width:18px;height:14px;background:#dcdcdc"></div><div class="b" style="left:126px;top:82px;width:17px;height:14px;background:#dcdcdc"></div><div class="b" style="left:0px;top:0;width:1px;height:97px;background:#c4c4c4"></div><div class="b" style="left:20px;top:0;width:1px;height:97px;background:#c4c4c4"></div><div class="b" style="left:41px;top:0;width:1px;height:97px;background:#c4c4c4"></div><div class="b" style="left:62px;top:0;width:1px;height:97px;background:#c4c4c4"></div><div class="b" style="left:83px;top:0;width:1px;height:97px;background:#c4c4c4"></div><div class="b" style="left:103px;top:0;width:1px;height:97px;background:#c4c4c4"></div><div class="b" style="left:124px;top:0;width:1px;height:97px;background:#c4c4c4"></div><div class="b" style="left:144px;top:0;width:1px;height:97px;background:#c4c4c4"></div><div class="b" style="left:0;top:0px;width:145px;height:1px;background:#c4c4c4"></div><div class="b" style="left:0;top:16px;width:145px;height:1px;background:#c4c4c4"></div><div class="b" style="left:0;top:32px;width:145px;height:1px;background:#c4c4c4"></div><div class="b" style="left:0;top:48px;width:145px;height:1px;background:#c4c4c4"></div><div class="b" style="left:0;top:64px;width:145px;height:1px;background:#c4c4c4"></div><div class="b" style="left:0;top:80px;width:145px;height:1px;background:#c4c4c4"></div><div class="b" style="left:0;top:96px;width:145px;height:1px;background:#c4c4c4"></div></div>
<div class="t mh" style="right:14px;top:269px;transform:scaleX(1.135)"><span class="lnk">Июнь</span></div>
<svg class="ab" style="left:1009.9px;top:271px" width="12" height="12" viewBox="0 0 12 12"><path d="M2 2 L10 10 M10 2 L2 10" stroke="#666" stroke-width="3.4" stroke-linecap="square" opacity="0.9"/><path d="M2 2 L10 10 M10 2 L2 10" stroke="#ff0a0a" stroke-width="1.5" stroke-linecap="square"/></svg>
<div class="cal" style="left:932px;top:303px;width:145px;height:97px"><div class="t dn" style="left:1px;top:1px;width:20px;height:15px;padding-top:5px">01</div><div class="b" style="left:23px;top:2px;width:17px;height:14px;background:#fee8a6"></div><div class="t dn" style="left:22px;top:1px;width:19px;height:15px;padding-top:5px">02</div><div class="t dn" style="left:42px;top:1px;width:20px;height:15px;padding-top:5px">03</div><div class="t dn" style="left:63px;top:1px;width:20px;height:15px;padding-top:5px">04</div><div class="t dn" style="left:84px;top:1px;width:20px;height:15px;padding-top:5px">05</div><div class="b" style="left:106px;top:2px;width:17px;height:14px;background:#fee8a6"></div><div class="t dn" style="left:105px;top:1px;width:19px;height:15px;padding-top:5px">06</div><div class="t dn" style="left:125px;top:1px;width:19px;height:15px;padding-top:5px">07</div><div class="t dn" style="left:1px;top:17px;width:20px;height:15px;padding-top:6px">08</div><div class="b" style="left:23px;top:18px;width:17px;height:14px;background:#fee8a6"></div><div class="t dn" style="left:22px;top:17px;width:19px;height:15px;padding-top:6px">09</div><div class="t dn" style="left:42px;top:17px;width:20px;height:15px;padding-top:6px">10</div><div class="t dn" style="left:63px;top:17px;width:20px;height:15px;padding-top:6px">11</div><div class="t dn" style="left:84px;top:17px;width:20px;height:15px;padding-top:6px">12</div><div class="b" style="left:106px;top:18px;width:17px;height:14px;background:#fee8a6"></div><div class="t dn" style="left:105px;top:17px;width:19px;height:15px;padding-top:6px">13</div><div class="t dn" style="left:125px;top:17px;width:19px;height:15px;padding-top:6px">14</div><div class="t dn" style="left:1px;top:33px;width:20px;height:15px;padding-top:6px">15</div><div class="b" style="left:23px;top:34px;width:17px;height:14px;background:#fee8a6"></div><div class="t dn" style="left:22px;top:33px;width:19px;height:15px;padding-top:6px">16</div><div class="t dn" style="left:42px;top:33px;width:20px;height:15px;padding-top:6px">17</div><div class="t dn" style="left:63px;top:33px;width:20px;height:15px;padding-top:6px">18</div><div class="t dn" style="left:84px;top:33px;width:20px;height:15px;padding-top:6px">19</div><div class="b" style="left:106px;top:34px;width:17px;height:14px;background:#fee8a6"></div><div class="t dn" style="left:105px;top:33px;width:19px;height:15px;padding-top:6px">20</div><div class="t dn" style="left:125px;top:33px;width:19px;height:15px;padding-top:6px">21</div><div class="t dn" style="left:1px;top:49px;width:20px;height:15px;padding-top:6px">22</div><div class="b" style="left:23px;top:50px;width:17px;height:14px;background:#fee8a6"></div><div class="t dn" style="left:22px;top:49px;width:19px;height:15px;padding-top:6px">23</div><div class="t dn" style="left:42px;top:49px;width:20px;height:15px;padding-top:6px">24</div><div class="t dn" style="left:63px;top:49px;width:20px;height:15px;padding-top:6px">25</div><div class="t dn" style="left:84px;top:49px;width:20px;height:15px;padding-top:6px">26</div><div class="b" style="left:106px;top:50px;width:17px;height:14px;background:#fee8a6"></div><div class="t dn" style="left:105px;top:49px;width:19px;height:15px;padding-top:6px">27</div><div class="t dn" style="left:125px;top:49px;width:19px;height:15px;padding-top:6px">28</div><div class="t dn" style="left:1px;top:65px;width:20px;height:15px;padding-top:6px">29</div><div class="b" style="left:23px;top:66px;width:17px;height:14px;background:#fee8a6"></div><div class="t dn" style="left:22px;top:65px;width:19px;height:15px;padding-top:6px">30</div><div class="b" style="left:43px;top:66px;width:18px;height:14px;background:#dcdcdc"></div><div class="b" style="left:64px;top:66px;width:18px;height:14px;background:#dcdcdc"></div><div class="b" style="left:85px;top:66px;width:18px;height:14px;background:#dcdcdc"></div><div class="b" style="left:106px;top:66px;width:17px;height:14px;background:#dcdcdc"></div><div class="b" style="left:126px;top:66px;width:17px;height:14px;background:#dcdcdc"></div><div class="b" style="left:2px;top:82px;width:18px;height:14px;background:#dcdcdc"></div><div class="b" style="left:23px;top:82px;width:17px;height:14px;background:#dcdcdc"></div><div class="b" style="left:43px;top:82px;width:18px;height:14px;background:#dcdcdc"></div><div class="b" style="left:64px;top:82px;width:18px;height:14px;background:#dcdcdc"></div><div class="b" style="left:85px;top:82px;width:18px;height:14px;background:#dcdcdc"></div><div class="b" style="left:106px;top:82px;width:17px;height:14px;background:#dcdcdc"></div><div class="b" style="left:126px;top:82px;width:17px;height:14px;background:#dcdcdc"></div><div class="b" style="left:0px;top:0;width:1px;height:97px;background:#c4c4c4"></div><div class="b" style="left:21px;top:0;width:1px;height:97px;background:#c4c4c4"></div><div class="b" style="left:41px;top:0;width:1px;height:97px;background:#c4c4c4"></div><div class="b" style="left:62px;top:0;width:1px;height:97px;background:#c4c4c4"></div><div class="b" style="left:83px;top:0;width:1px;height:97px;background:#c4c4c4"></div><div class="b" style="left:104px;top:0;width:1px;height:97px;background:#c4c4c4"></div><div class="b" style="left:124px;top:0;width:1px;height:97px;background:#c4c4c4"></div><div class="b" style="left:144px;top:0;width:1px;height:97px;background:#c4c4c4"></div><div class="b" style="left:0;top:0px;width:145px;height:1px;background:#c4c4c4"></div><div class="b" style="left:0;top:16px;width:145px;height:1px;background:#c4c4c4"></div><div class="b" style="left:0;top:32px;width:145px;height:1px;background:#c4c4c4"></div><div class="b" style="left:0;top:48px;width:145px;height:1px;background:#c4c4c4"></div><div class="b" style="left:0;top:64px;width:145px;height:1px;background:#c4c4c4"></div><div class="b" style="left:0;top:80px;width:145px;height:1px;background:#c4c4c4"></div><div class="b" style="left:0;top:96px;width:145px;height:1px;background:#c4c4c4"></div></div>
<div class="t mh" style="right:314px;top:414px;transform:scaleX(1.107)"><span class="lnk">Июль</span></div>
<svg class="ab" style="left:710.8px;top:416px" width="12" height="12" viewBox="0 0 12 12"><path d="M2 2 L10 10 M10 2 L2 10" stroke="#666" stroke-width="3.4" stroke-linecap="square" opacity="0.9"/><path d="M2 2 L10 10 M10 2 L2 10" stroke="#ff0a0a" stroke-width="1.5" stroke-linecap="square"/></svg>
<div class="cal" style="left:626px;top:448px;width:151px;height:97px"><div class="t dn" style="left:1px;top:1px;width:21px;height:15px;padding-top:5px">01</div><div class="t dn" style="left:23px;top:1px;width:20px;height:15px;padding-top:5px">02</div><div class="b" style="left:45px;top:2px;width:19px;height:14px;background:#fee8a6"></div><div class="t dn" style="left:44px;top:1px;width:21px;height:15px;padding-top:5px">03</div><div class="t dn" style="left:66px;top:1px;width:20px;height:15px;padding-top:5px">04</div><div class="t dn" style="left:87px;top:1px;width:21px;height:15px;padding-top:5px">05</div><div class="t dn" style="left:109px;top:1px;width:20px;height:15px;padding-top:5px">06</div><div class="b" style="left:131px;top:2px;width:18px;height:14px;background:#fee8a6"></div><div class="t dn" style="left:130px;top:1px;width:20px;height:15px;padding-top:5px">07</div><div class="t dn" style="left:1px;top:17px;width:21px;height:15px;padding-top:6px">08</div><div class="t dn" style="left:23px;top:17px;width:20px;height:15px;padding-top:6px">09</div><div class="b" style="left:45px;top:18px;width:19px;height:14px;background:#fee8a6"></div><div class="t dn" style="left:44px;top:17px;width:21px;height:15px;padding-top:6px">10</div><div class="t dn" style="left:66px;top:17px;width:20px;height:15px;padding-top:6px">11</div><div class="t dn" style="left:87px;top:17px;width:21px;height:15px;padding-top:6px">12</div><div class="t dn" style="left:109px;top:17px;width:20px;height:15px;padding-top:6px">13</div><div class="b" style="left:131px;top:18px;width:18px;height:14px;background:#fee8a6"></div><div class="t dn" style="left:130px;top:17px;width:20px;height:15px;padding-top:6px">14</div><div class="t dn" style="left:1px;top:33px;width:21px;height:15px;padding-top:6px">15</div><div class="t dn" style="left:23px;top:33px;width:20px;height:15px;padding-top:6px">16</div><div class="b" style="left:45px;top:34px;width:19px;height:14px;background:#fee8a6"></div><div class="t dn" style="left:44px;top:33px;width:21px;height:15px;padding-top:6px">17</div><div class="t dn" style="left:66px;top:33px;width:20px;height:15px;padding-top:6px">18</div><div class="t dn" style="left:87px;top:33px;width:21px;height:15px;padding-top:6px">19</div><div class="t dn" style="left:109px;top:33px;width:20px;height:15px;padding-top:6px">20</div><div class="b" style="left:131px;top:34px;width:18px;height:14px;background:#fee8a6"></div><div class="t dn" style="left:130px;top:33px;width:20px;height:15px;padding-top:6px">21</div><div class="t dn" style="left:1px;top:49px;width:21px;height:15px;padding-top:6px">22</div><div class="t dn" style="left:23px;top:49px;width:20px;height:15px;padding-top:6px">23</div><div class="b" style="left:45px;top:50px;width:19px;height:14px;background:#fee8a6"></div><div class="t dn" style="left:44px;top:49px;width:21px;height:15px;padding-top:6px">24</div><div class="t dn" style="left:66px;top:49px;width:20px;height:15px;padding-top:6px">25</div><div class="t dn" style="left:87px;top:49px;width:21px;height:15px;padding-top:6px">26</div><div class="t dn" style="left:109px;top:49px;width:20px;height:15px;padding-top:6px">27</div><div class="b" style="left:131px;top:50px;width:18px;height:14px;background:#fee8a6"></div><div class="t dn" style="left:130px;top:49px;width:20px;height:15px;padding-top:6px">28</div><div class="t dn" style="left:1px;top:65px;width:21px;height:15px;padding-top:6px">29</div><div class="t dn" style="left:23px;top:65px;width:20px;height:15px;padding-top:6px">30</div><div class="b" style="left:45px;top:66px;width:19px;height:14px;background:#fee8a6"></div><div class="t dn" style="left:44px;top:65px;width:21px;height:15px;padding-top:6px">31</div><div class="b" style="left:67px;top:66px;width:18px;height:14px;background:#dcdcdc"></div><div class="b" style="left:88px;top:66px;width:19px;height:14px;background:#dcdcdc"></div><div class="b" style="left:110px;top:66px;width:18px;height:14px;background:#dcdcdc"></div><div class="b" style="left:131px;top:66px;width:18px;height:14px;background:#dcdcdc"></div><div class="b" style="left:2px;top:82px;width:19px;height:14px;background:#dcdcdc"></div><div class="b" style="left:24px;top:82px;width:18px;height:14px;background:#dcdcdc"></div><div class="b" style="left:45px;top:82px;width:19px;height:14px;background:#dcdcdc"></div><div class="b" style="left:67px;top:82px;width:18px;height:14px;background:#dcdcdc"></div><div class="b" style="left:88px;top:82px;width:19px;height:14px;background:#dcdcdc"></div><div class="b" style="left:110px;top:82px;width:18px;height:14px;background:#dcdcdc"></div><div class="b" style="left:131px;top:82px;width:18px;height:14px;background:#dcdcdc"></div><div class="b" style="left:0px;top:0;width:1px;height:97px;background:#c4c4c4"></div><div class="b" style="left:22px;top:0;width:1px;height:97px;background:#c4c4c4"></div><div class="b" style="left:43px;top:0;width:1px;height:97px;background:#c4c4c4"></div><div class="b" style="left:65px;top:0;width:1px;height:97px;background:#c4c4c4"></div><div class="b" style="left:86px;top:0;width:1px;height:97px;background:#c4c4c4"></div><div class="b" style="left:108px;top:0;width:1px;height:97px;background:#c4c4c4"></div><div class="b" style="left:129px;top:0;width:1px;height:97px;background:#c4c4c4"></div><div class="b" style="left:150px;top:0;width:1px;height:97px;background:#c4c4c4"></div><div class="b" style="left:0;top:0px;width:151px;height:1px;background:#c4c4c4"></div><div class="b" style="left:0;top:16px;width:151px;height:1px;background:#c4c4c4"></div><div class="b" style="left:0;top:32px;width:151px;height:1px;background:#c4c4c4"></div><div class="b" style="left:0;top:48px;width:151px;height:1px;background:#c4c4c4"></div><div class="b" style="left:0;top:64px;width:151px;height:1px;background:#c4c4c4"></div><div class="b" style="left:0;top:80px;width:151px;height:1px;background:#c4c4c4"></div><div class="b" style="left:0;top:96px;width:151px;height:1px;background:#c4c4c4"></div></div>
<div class="t mh" style="right:164px;top:414px;transform:scaleX(1.010)"><span class="lnk">Август</span></div>
<svg class="ab" style="left:855.2px;top:416px" width="12" height="12" viewBox="0 0 12 12"><path d="M2 2 L10 10 M10 2 L2 10" stroke="#666" stroke-width="3.4" stroke-linecap="square" opacity="0.9"/><path d="M2 2 L10 10 M10 2 L2 10" stroke="#ff0a0a" stroke-width="1.5" stroke-linecap="square"/></svg>
<div class="cal" style="left:782px;top:448px;width:145px;height:97px"><div class="t dn" style="left:1px;top:1px;width:19px;height:15px;padding-top:5px">01</div><div class="t dn" style="left:21px;top:1px;width:20px;height:15px;padding-top:5px">02</div><div class="t dn" style="left:42px;top:1px;width:20px;height:15px;padding-top:5px">03</div><div class="b" style="left:64px;top:2px;width:18px;height:14px;background:#fee8a6"></div><div class="t dn" style="left:63px;top:1px;width:20px;height:15px;padding-top:5px">04</div><div class="t dn" style="left:84px;top:1px;width:19px;height:15px;padding-top:5px">05</div><div class="t dn" style="left:104px;top:1px;width:20px;height:15px;padding-top:5px">06</div><div class="t dn" style="left:125px;top:1px;width:19px;height:15px;padding-top:5px">07</div><div class="t dn" style="left:1px;top:17px;width:19px;height:15px;padding-top:6px">08</div><div class="t dn" style="left:21px;top:17px;width:20px;height:15px;padding-top:6px">09</div><div class="t dn" style="left:42px;top:17px;width:20px;height:15px;padding-top:6px">10</div><div class="b" style="left:64px;top:18px;width:18px;height:14px;background:#fee8a6"></div><div class="t dn" style="left:63px;top:17px;width:20px;height:15px;padding-top:6px">11</div><div class="t dn" style="left:84px;top:17px;width:19px;height:15px;padding-top:6px">12</div><div class="t dn" style="left:104px;top:17px;width:20px;height:15px;padding-top:6px">13</div><div class="t dn" style="left:125px;top:17px;width:19px;height:15px;padding-top:6px">14</div><div class="t dn" style="left:1px;top:33px;width:19px;height:15px;padding-top:6px">15</div><div class="t dn" style="left:21px;top:33px;width:20px;height:15px;padding-top:6px">16</div><div class="t dn" style="left:42px;top:33px;width:20px;height:15px;padding-top:6px">17</div><div class="b" style="left:64px;top:34px;width:18px;height:14px;background:#fee8a6"></div><div class="t dn" style="left:63px;top:33px;width:20px;height:15px;padding-top:6px">18</div><div class="t dn" style="left:84px;top:33px;width:19px;height:15px;padding-top:6px">19</div><div class="t dn" style="left:104px;top:33px;width:20px;height:15px;padding-top:6px">20</div><div class="t dn" style="left:125px;top:33px;width:19px;height:15px;padding-top:6px">21</div><div class="t dn" style="left:1px;top:49px;width:19px;height:15px;padding-top:6px">22</div><div class="t dn" style="left:21px;top:49px;width:20px;height:15px;padding-top:6px">23</div><div class="t dn" style="left:42px;top:49px;width:20px;height:15px;padding-top:6px">24</div><div class="b" style="left:64px;top:50px;width:18px;height:14px;background:#fee8a6"></div><div class="t dn" style="left:63px;top:49px;width:20px;height:15px;padding-top:6px">25</div><div class="t dn" style="left:84px;top:49px;width:19px;height:15px;padding-top:6px">26</div><div class="t dn" style="left:104px;top:49px;width:20px;height:15px;padding-top:6px">27</div><div class="t dn" style="left:125px;top:49px;width:19px;height:15px;padding-top:6px">28</div><div class="t dn" style="left:1px;top:65px;width:19px;height:15px;padding-top:6px">29</div><div class="t dn" style="left:21px;top:65px;width:20px;height:15px;padding-top:6px">30</div><div class="t dn" style="left:42px;top:65px;width:20px;height:15px;padding-top:6px">31</div><div class="b" style="left:64px;top:66px;width:18px;height:14px;background:#dcdcdc"></div><div class="b" style="left:85px;top:66px;width:17px;height:14px;background:#dcdcdc"></div><div class="b" style="left:105px;top:66px;width:18px;height:14px;background:#dcdcdc"></div><div class="b" style="left:126px;top:66px;width:17px;height:14px;background:#dcdcdc"></div><div class="b" style="left:2px;top:82px;width:17px;height:14px;background:#dcdcdc"></div><div class="b" style="left:22px;top:82px;width:18px;height:14px;background:#dcdcdc"></div><div class="b" style="left:43px;top:82px;width:18px;height:14px;background:#dcdcdc"></div><div class="b" style="left:64px;top:82px;width:18px;height:14px;background:#dcdcdc"></div><div class="b" style="left:85px;top:82px;width:17px;height:14px;background:#dcdcdc"></div><div class="b" style="left:105px;top:82px;width:18px;height:14px;background:#dcdcdc"></div><div class="b" style="left:126px;top:82px;width:17px;height:14px;background:#dcdcdc"></div><div class="b" style="left:0px;top:0;width:1px;height:97px;background:#c4c4c4"></div><div class="b" style="left:20px;top:0;width:1px;height:97px;background:#c4c4c4"></div><div class="b" style="left:41px;top:0;width:1px;height:97px;background:#c4c4c4"></div><div class="b" style="left:62px;top:0;width:1px;height:97px;background:#c4c4c4"></div><div class="b" style="left:83px;top:0;width:1px;height:97px;background:#c4c4c4"></div><div class="b" style="left:103px;top:0;width:1px;height:97px;background:#c4c4c4"></div><div class="b" style="left:124px;top:0;width:1px;height:97px;background:#c4c4c4"></div><div class="b" style="left:144px;top:0;width:1px;height:97px;background:#c4c4c4"></div><div class="b" style="left:0;top:0px;width:145px;height:1px;background:#c4c4c4"></div><div class="b" style="left:0;top:16px;width:145px;height:1px;background:#c4c4c4"></div><div class="b" style="left:0;top:32px;width:145px;height:1px;background:#c4c4c4"></div><div class="b" style="left:0;top:48px;width:145px;height:1px;background:#c4c4c4"></div><div class="b" style="left:0;top:64px;width:145px;height:1px;background:#c4c4c4"></div><div class="b" style="left:0;top:80px;width:145px;height:1px;background:#c4c4c4"></div><div class="b" style="left:0;top:96px;width:145px;height:1px;background:#c4c4c4"></div></div>
<div class="t mh" style="right:14px;top:414px;transform:scaleX(1.017)"><span class="lnk">Сентябрь</span></div>
<svg class="ab" style="left:982.7px;top:416px" width="12" height="12" viewBox="0 0 12 12"><path d="M2 2 L10 10 M10 2 L2 10" stroke="#666" stroke-width="3.4" stroke-linecap="square" opacity="0.9"/><path d="M2 2 L10 10 M10 2 L2 10" stroke="#ff0a0a" stroke-width="1.5" stroke-linecap="square"/></svg>
<div class="cal" style="left:932px;top:448px;width:145px;height:97px"><div class="b" style="left:2px;top:2px;width:18px;height:14px;background:#fee8a6"></div><div class="t dn" style="left:1px;top:1px;width:20px;height:15px;padding-top:5px">01</div><div class="t dn" style="left:22px;top:1px;width:19px;height:15px;padding-top:5px">02</div><div class="t dn" style="left:42px;top:1px;width:20px;height:15px;padding-top:5px">03</div><div class="t dn" style="left:63px;top:1px;width:20px;height:15px;padding-top:5px">04</div><div class="b" style="left:85px;top:2px;width:18px;height:14px;background:#fee8a6"></div><div class="t dn" style="left:84px;top:1px;width:20px;height:15px;padding-top:5px">05</div><div class="t dn" style="left:105px;top:1px;width:19px;height:15px;padding-top:5px">06</div><div class="t dn" style="left:125px;top:1px;width:19px;height:15px;padding-top:5px">07</div><div class="b" style="left:2px;top:18px;width:18px;height:14px;background:#fee8a6"></div><div class="t dn" style="left:1px;top:17px;width:20px;height:15px;padding-top:6px">08</div><div class="t dn" style="left:22px;top:17px;width:19px;height:15px;padding-top:6px">09</div><div class="t dn" style="left:42px;top:17px;width:20px;height:15px;padding-top:6px">10</div><div class="t dn" style="left:63px;top:17px;width:20px;height:15px;padding-top:6px">11</div><div class="b" style="left:85px;top:18px;width:18px;height:14px;background:#fee8a6"></div><div class="t dn" style="left:84px;top:17px;width:20px;height:15px;padding-top:6px">12</div><div class="t dn" style="left:105px;top:17px;width:19px;height:15px;padding-top:6px">13</div><div class="t dn" style="left:125px;top:17px;width:19px;height:15px;padding-top:6px">14</div><div class="b" style="left:2px;top:34px;width:18px;height:14px;background:#fee8a6"></div><div class="t dn" style="left:1px;top:33px;width:20px;height:15px;padding-top:6px">15</div><div class="t dn" style="left:22px;top:33px;width:19px;height:15px;padding-top:6px">16</div><div class="t dn" style="left:42px;top:33px;width:20px;height:15px;padding-top:6px">17</div><div class="t dn" style="left:63px;top:33px;width:20px;height:15px;padding-top:6px">18</div><div class="b" style="left:85px;top:34px;width:18px;height:14px;background:#fee8a6"></div><div class="t dn" style="left:84px;top:33px;width:20px;height:15px;padding-top:6px">19</div><div class="t dn" style="left:105px;top:33px;width:19px;height:15px;padding-top:6px">20</div><div class="t dn" style="left:125px;top:33px;width:19px;height:15px;padding-top:6px">21</div><div class="b" style="left:2px;top:50px;width:18px;height:14px;background:#fee8a6"></div><div class="t dn" style="left:1px;top:49px;width:20px;height:15px;padding-top:6px">22</div><div class="t dn" style="left:22px;top:49px;width:19px;height:15px;padding-top:6px">23</div><div class="t dn" style="left:42px;top:49px;width:20px;height:15px;padding-top:6px">24</div><div class="t dn" style="left:63px;top:49px;width:20px;height:15px;padding-top:6px">25</div><div class="b" style="left:85px;top:50px;width:18px;height:14px;background:#fee8a6"></div><div class="t dn" style="left:84px;top:49px;width:20px;height:15px;padding-top:6px">26</div><div class="t dn" style="left:105px;top:49px;width:19px;height:15px;padding-top:6px">27</div><div class="t dn" style="left:125px;top:49px;width:19px;height:15px;padding-top:6px">28</div><div class="b" style="left:2px;top:66px;width:18px;height:14px;background:#fee8a6"></div><div class="t dn" style="left:1px;top:65px;width:20px;height:15px;padding-top:6px">29</div><div class="t dn" style="left:22px;top:65px;width:19px;height:15px;padding-top:6px">30</div><div class="b" style="left:43px;top:66px;width:18px;height:14px;background:#dcdcdc"></div><div class="b" style="left:64px;top:66px;width:18px;height:14px;background:#dcdcdc"></div><div class="b" style="left:85px;top:66px;width:18px;height:14px;background:#dcdcdc"></div><div class="b" style="left:106px;top:66px;width:17px;height:14px;background:#dcdcdc"></div><div class="b" style="left:126px;top:66px;width:17px;height:14px;background:#dcdcdc"></div><div class="b" style="left:2px;top:82px;width:18px;height:14px;background:#dcdcdc"></div><div class="b" style="left:23px;top:82px;width:17px;height:14px;background:#dcdcdc"></div><div class="b" style="left:43px;top:82px;width:18px;height:14px;background:#dcdcdc"></div><div class="b" style="left:64px;top:82px;width:18px;height:14px;background:#dcdcdc"></div><div class="b" style="left:85px;top:82px;width:18px;height:14px;background:#dcdcdc"></div><div class="b" style="left:106px;top:82px;width:17px;height:14px;background:#dcdcdc"></div><div class="b" style="left:126px;top:82px;width:17px;height:14px;background:#dcdcdc"></div><div class="b" style="left:0px;top:0;width:1px;height:97px;background:#c4c4c4"></div><div class="b" style="left:21px;top:0;width:1px;height:97px;background:#c4c4c4"></div><div class="b" style="left:41px;top:0;width:1px;height:97px;background:#c4c4c4"></div><div class="b" style="left:62px;top:0;width:1px;height:97px;background:#c4c4c4"></div><div class="b" style="left:83px;top:0;width:1px;height:97px;background:#c4c4c4"></div><div class="b" style="left:104px;top:0;width:1px;height:97px;background:#c4c4c4"></div><div class="b" style="left:124px;top:0;width:1px;height:97px;background:#c4c4c4"></div><div class="b" style="left:144px;top:0;width:1px;height:97px;background:#c4c4c4"></div><div class="b" style="left:0;top:0px;width:145px;height:1px;background:#c4c4c4"></div><div class="b" style="left:0;top:16px;width:145px;height:1px;background:#c4c4c4"></div><div class="b" style="left:0;top:32px;width:145px;height:1px;background:#c4c4c4"></div><div class="b" style="left:0;top:48px;width:145px;height:1px;background:#c4c4c4"></div><div class="b" style="left:0;top:64px;width:145px;height:1px;background:#c4c4c4"></div><div class="b" style="left:0;top:80px;width:145px;height:1px;background:#c4c4c4"></div><div class="b" style="left:0;top:96px;width:145px;height:1px;background:#c4c4c4"></div></div>
<div class="t mh" style="right:314px;top:559px;transform:scaleX(1.046)"><span class="lnk">Октябрь</span></div>
<svg class="ab" style="left:690.5px;top:561px" width="12" height="12" viewBox="0 0 12 12"><path d="M2 2 L10 10 M10 2 L2 10" stroke="#666" stroke-width="3.4" stroke-linecap="square" opacity="0.9"/><path d="M2 2 L10 10 M10 2 L2 10" stroke="#ff0a0a" stroke-width="1.5" stroke-linecap="square"/></svg>
<div class="cal" style="left:626px;top:593px;width:151px;height:97px"><div class="t dn" style="left:1px;top:1px;width:21px;height:15px;padding-top:5px">01</div><div class="b" style="left:24px;top:2px;width:18px;height:14px;background:#fee8a6"></div><div class="t dn" style="left:23px;top:1px;width:20px;height:15px;padding-top:5px">02</div><div class="t dn" style="left:44px;top:1px;width:21px;height:15px;padding-top:5px">03</div><div class="t dn" style="left:66px;top:1px;width:20px;height:15px;padding-top:5px">04</div><div class="t dn" style="left:87px;top:1px;width:21px;height:15px;padding-top:5px">05</div><div class="b" style="left:110px;top:2px;width:18px;height:14px;background:#fee8a6"></div><div class="t dn" style="left:109px;top:1px;width:20px;height:15px;padding-top:5px">06</div><div class="t dn" style="left:130px;top:1px;width:20px;height:15px;padding-top:5px">07</div><div class="t dn" style="left:1px;top:17px;width:21px;height:15px;padding-top:6px">08</div><div class="b" style="left:24px;top:18px;width:18px;height:14px;background:#fee8a6"></div><div class="t dn" style="left:23px;top:17px;width:20px;height:15px;padding-top:6px">09</div><div class="t dn" style="left:44px;top:17px;width:21px;height:15px;padding-top:6px">10</div><div class="t dn" style="left:66px;top:17px;width:20px;height:15px;padding-top:6px">11</div><div class="t dn" style="left:87px;top:17px;width:21px;height:15px;padding-top:6px">12</div><div class="b" style="left:110px;top:18px;width:18px;height:14px;background:#fee8a6"></div><div class="t dn" style="left:109px;top:17px;width:20px;height:15px;padding-top:6px">13</div><div class="t dn" style="left:130px;top:17px;width:20px;height:15px;padding-top:6px">14</div><div class="t dn" style="left:1px;top:33px;width:21px;height:15px;padding-top:6px">15</div><div class="b" style="left:24px;top:34px;width:18px;height:14px;background:#fee8a6"></div><div class="t dn" style="left:23px;top:33px;width:20px;height:15px;padding-top:6px">16</div><div class="t dn" style="left:44px;top:33px;width:21px;height:15px;padding-top:6px">17</div><div class="t dn" style="left:66px;top:33px;width:20px;height:15px;padding-top:6px">18</div><div class="t dn" style="left:87px;top:33px;width:21px;height:15px;padding-top:6px">19</div><div class="b" style="left:110px;top:34px;width:18px;height:14px;background:#fee8a6"></div><div class="t dn" style="left:109px;top:33px;width:20px;height:15px;padding-top:6px">20</div><div class="t dn" style="left:130px;top:33px;width:20px;height:15px;padding-top:6px">21</div><div class="t dn" style="left:1px;top:49px;width:21px;height:15px;padding-top:6px">22</div><div class="b" style="left:24px;top:50px;width:18px;height:14px;background:#fee8a6"></div><div class="t dn" style="left:23px;top:49px;width:20px;height:15px;padding-top:6px">23</div><div class="t dn" style="left:44px;top:49px;width:21px;height:15px;padding-top:6px">24</div><div class="t dn" style="left:66px;top:49px;width:20px;height:15px;padding-top:6px">25</div><div class="t dn" style="left:87px;top:49px;width:21px;height:15px;padding-top:6px">26</div><div class="b" style="left:110px;top:50px;width:18px;height:14px;background:#fee8a6"></div><div class="t dn" style="left:109px;top:49px;width:20px;height:15px;padding-top:6px">27</div><div class="t dn" style="left:130px;top:49px;width:20px;height:15px;padding-top:6px">28</div><div class="t dn" style="left:1px;top:65px;width:21px;height:15px;padding-top:6px">29</div><div class="b" style="left:24px;top:66px;width:18px;height:14px;background:#fee8a6"></div><div class="t dn" style="left:23px;top:65px;width:20px;height:15px;padding-top:6px">30</div><div class="t dn" style="left:44px;top:65px;width:21px;height:15px;padding-top:6px">31</div><div class="b" style="left:67px;top:66px;width:18px;height:14px;background:#dcdcdc"></div><div class="b" style="left:88px;top:66px;width:19px;height:14px;background:#dcdcdc"></div><div class="b" style="left:110px;top:66px;width:18px;height:14px;background:#dcdcdc"></div><div class="b" style="left:131px;top:66px;width:18px;height:14px;background:#dcdcdc"></div><div class="b" style="left:2px;top:82px;width:19px;height:14px;background:#dcdcdc"></div><div class="b" style="left:24px;top:82px;width:18px;height:14px;background:#dcdcdc"></div><div class="b" style="left:45px;top:82px;width:19px;height:14px;background:#dcdcdc"></div><div class="b" style="left:67px;top:82px;width:18px;height:14px;background:#dcdcdc"></div><div class="b" style="left:88px;top:82px;width:19px;height:14px;background:#dcdcdc"></div><div class="b" style="left:110px;top:82px;width:18px;height:14px;background:#dcdcdc"></div><div class="b" style="left:131px;top:82px;width:18px;height:14px;background:#dcdcdc"></div><div class="b" style="left:0px;top:0;width:1px;height:97px;background:#c4c4c4"></div><div class="b" style="left:22px;top:0;width:1px;height:97px;background:#c4c4c4"></div><div class="b" style="left:43px;top:0;width:1px;height:97px;background:#c4c4c4"></div><div class="b" style="left:65px;top:0;width:1px;height:97px;background:#c4c4c4"></div><div class="b" style="left:86px;top:0;width:1px;height:97px;background:#c4c4c4"></div><div class="b" style="left:108px;top:0;width:1px;height:97px;background:#c4c4c4"></div><div class="b" style="left:129px;top:0;width:1px;height:97px;background:#c4c4c4"></div><div class="b" style="left:150px;top:0;width:1px;height:97px;background:#c4c4c4"></div><div class="b" style="left:0;top:0px;width:151px;height:1px;background:#c4c4c4"></div><div class="b" style="left:0;top:16px;width:151px;height:1px;background:#c4c4c4"></div><div class="b" style="left:0;top:32px;width:151px;height:1px;background:#c4c4c4"></div><div class="b" style="left:0;top:48px;width:151px;height:1px;background:#c4c4c4"></div><div class="b" style="left:0;top:64px;width:151px;height:1px;background:#c4c4c4"></div><div class="b" style="left:0;top:80px;width:151px;height:1px;background:#c4c4c4"></div><div class="b" style="left:0;top:96px;width:151px;height:1px;background:#c4c4c4"></div></div>
<div class="t mh" style="right:164px;top:559px;transform:scaleX(1.084)"><span class="lnk">Ноябрь</span></div>
<svg class="ab" style="left:846.2px;top:561px" width="12" height="12" viewBox="0 0 12 12"><path d="M2 2 L10 10 M10 2 L2 10" stroke="#666" stroke-width="3.4" stroke-linecap="square" opacity="0.9"/><path d="M2 2 L10 10 M10 2 L2 10" stroke="#ff0a0a" stroke-width="1.5" stroke-linecap="square"/></svg>
<div class="cal" style="left:782px;top:593px;width:145px;height:97px"><div class="t dn" style="left:1px;top:1px;width:19px;height:15px;padding-top:5px">01</div><div class="t dn" style="left:21px;top:1px;width:20px;height:15px;padding-top:5px">02</div><div class="b" style="left:43px;top:2px;width:18px;height:14px;background:#fee8a6"></div><div class="t dn" style="left:42px;top:1px;width:20px;height:15px;padding-top:5px">03</div><div class="t dn" style="left:63px;top:1px;width:20px;height:15px;padding-top:5px">04</div><div class="t dn" style="left:84px;top:1px;width:19px;height:15px;padding-top:5px">05</div><div class="t dn" style="left:104px;top:1px;width:20px;height:15px;padding-top:5px">06</div><div class="b" style="left:126px;top:2px;width:17px;height:14px;background:#fee8a6"></div><div class="t dn" style="left:125px;top:1px;width:19px;height:15px;padding-top:5px">07</div><div class="t dn" style="left:1px;top:17px;width:19px;height:15px;padding-top:6px">08</div><div class="t dn" style="left:21px;top:17px;width:20px;height:15px;padding-top:6px">09</div><div class="b" style="left:43px;top:18px;width:18px;height:14px;background:#fee8a6"></div><div class="t dn" style="left:42px;top:17px;width:20px;height:15px;padding-top:6px">10</div><div class="t dn" style="left:63px;top:17px;width:20px;height:15px;padding-top:6px">11</div><div class="t dn" style="left:84px;top:17px;width:19px;height:15px;padding-top:6px">12</div><div class="t dn" style="left:104px;top:17px;width:20px;height:15px;padding-top:6px">13</div><div class="b" style="left:126px;top:18px;width:17px;height:14px;background:#fee8a6"></div><div class="t dn" style="left:125px;top:17px;width:19px;height:15px;padding-top:6px">14</div><div class="t dn" style="left:1px;top:33px;width:19px;height:15px;padding-top:6px">15</div><div class="t dn" style="left:21px;top:33px;width:20px;height:15px;padding-top:6px">16</div><div class="b" style="left:43px;top:34px;width:18px;height:14px;background:#fee8a6"></div><div class="t dn" style="left:42px;top:33px;width:20px;height:15px;padding-top:6px">17</div><div class="t dn" style="left:63px;top:33px;width:20px;height:15px;padding-top:6px">18</div><div class="t dn" style="left:84px;top:33px;width:19px;height:15px;padding-top:6px">19</div><div class="t dn" style="left:104px;top:33px;width:20px;height:15px;padding-top:6px">20</div><div class="b" style="left:126px;top:34px;width:17px;height:14px;background:#fee8a6"></div><div class="t dn" style="left:125px;top:33px;width:19px;height:15px;padding-top:6px">21</div><div class="t dn" style="left:1px;top:49px;width:19px;height:15px;padding-top:6px">22</div><div class="t dn" style="left:21px;top:49px;width:20px;height:15px;padding-top:6px">23</div><div class="b" style="left:43px;top:50px;width:18px;height:14px;background:#fee8a6"></div><div class="t dn" style="left:42px;top:49px;width:20px;height:15px;padding-top:6px">24</div><div class="t dn" style="left:63px;top:49px;width:20px;height:15px;padding-top:6px">25</div><div class="t dn" style="left:84px;top:49px;width:19px;height:15px;padding-top:6px">26</div><div class="t dn" style="left:104px;top:49px;width:20px;height:15px;padding-top:6px">27</div><div class="b" style="left:126px;top:50px;width:17px;height:14px;background:#fee8a6"></div><div class="t dn" style="left:125px;top:49px;width:19px;height:15px;padding-top:6px">28</div><div class="t dn" style="left:1px;top:65px;width:19px;height:15px;padding-top:6px">29</div><div class="t dn" style="left:21px;top:65px;width:20px;height:15px;padding-top:6px">30</div><div class="b" style="left:43px;top:66px;width:18px;height:14px;background:#dcdcdc"></div><div class="b" style="left:64px;top:66px;width:18px;height:14px;background:#dcdcdc"></div><div class="b" style="left:85px;top:66px;width:17px;height:14px;background:#dcdcdc"></div><div class="b" style="left:105px;top:66px;width:18px;height:14px;background:#dcdcdc"></div><div class="b" style="left:126px;top:66px;width:17px;height:14px;background:#dcdcdc"></div><div class="b" style="left:2px;top:82px;width:17px;height:14px;background:#dcdcdc"></div><div class="b" style="left:22px;top:82px;width:18px;height:14px;background:#dcdcdc"></div><div class="b" style="left:43px;top:82px;width:18px;height:14px;background:#dcdcdc"></div><div class="b" style="left:64px;top:82px;width:18px;height:14px;background:#dcdcdc"></div><div class="b" style="left:85px;top:82px;width:17px;height:14px;background:#dcdcdc"></div><div class="b" style="left:105px;top:82px;width:18px;height:14px;background:#dcdcdc"></div><div class="b" style="left:126px;top:82px;width:17px;height:14px;background:#dcdcdc"></div><div class="b" style="left:0px;top:0;width:1px;height:97px;background:#c4c4c4"></div><div class="b" style="left:20px;top:0;width:1px;height:97px;background:#c4c4c4"></div><div class="b" style="left:41px;top:0;width:1px;height:97px;background:#c4c4c4"></div><div class="b" style="left:62px;top:0;width:1px;height:97px;background:#c4c4c4"></div><div class="b" style="left:83px;top:0;width:1px;height:97px;background:#c4c4c4"></div><div class="b" style="left:103px;top:0;width:1px;height:97px;background:#c4c4c4"></div><div class="b" style="left:124px;top:0;width:1px;height:97px;background:#c4c4c4"></div><div class="b" style="left:144px;top:0;width:1px;height:97px;background:#c4c4c4"></div><div class="b" style="left:0;top:0px;width:145px;height:1px;background:#c4c4c4"></div><div class="b" style="left:0;top:16px;width:145px;height:1px;background:#c4c4c4"></div><div class="b" style="left:0;top:32px;width:145px;height:1px;background:#c4c4c4"></div><div class="b" style="left:0;top:48px;width:145px;height:1px;background:#c4c4c4"></div><div class="b" style="left:0;top:64px;width:145px;height:1px;background:#c4c4c4"></div><div class="b" style="left:0;top:80px;width:145px;height:1px;background:#c4c4c4"></div><div class="b" style="left:0;top:96px;width:145px;height:1px;background:#c4c4c4"></div></div>
<div class="t mh" style="right:14px;top:559px;transform:scaleX(1.063)"><span class="lnk">Декабрь</span></div>
<svg class="ab" style="left:989.1px;top:561px" width="12" height="12" viewBox="0 0 12 12"><path d="M2 2 L10 10 M10 2 L2 10" stroke="#666" stroke-width="3.4" stroke-linecap="square" opacity="0.9"/><path d="M2 2 L10 10 M10 2 L2 10" stroke="#ff0a0a" stroke-width="1.5" stroke-linecap="square"/></svg>
<div class="cal" style="left:932px;top:593px;width:145px;height:97px"><div class="t dn" style="left:1px;top:1px;width:20px;height:15px;padding-top:5px">01</div><div class="t dn" style="left:22px;top:1px;width:19px;height:15px;padding-top:5px">02</div><div class="t dn" style="left:42px;top:1px;width:20px;height:15px;padding-top:5px">03</div><div class="b" style="left:64px;top:2px;width:18px;height:14px;background:#fee8a6"></div><div class="t dn" style="left:63px;top:1px;width:20px;height:15px;padding-top:5px">04</div><div class="t dn" style="left:84px;top:1px;width:20px;height:15px;padding-top:5px">05</div><div class="t dn" style="left:105px;top:1px;width:19px;height:15px;padding-top:5px">06</div><div class="t dn" style="left:125px;top:1px;width:19px;height:15px;padding-top:5px">07</div><div class="t dn" style="left:1px;top:17px;width:20px;height:15px;padding-top:6px">08</div><div class="t dn" style="left:22px;top:17px;width:19px;height:15px;padding-top:6px">09</div><div class="t dn" style="left:42px;top:17px;width:20px;height:15px;padding-top:6px">10</div><div class="b" style="left:64px;top:18px;width:18px;height:14px;background:#fee8a6"></div><div class="t dn" style="left:63px;top:17px;width:20px;height:15px;padding-top:6px">11</div><div class="t dn" style="left:84px;top:17px;width:20px;height:15px;padding-top:6px">12</div><div class="t dn" style="left:105px;top:17px;width:19px;height:15px;padding-top:6px">13</div><div class="t dn" style="left:125px;top:17px;width:19px;height:15px;padding-top:6px">14</div><div class="t dn" style="left:1px;top:33px;width:20px;height:15px;padding-top:6px">15</div><div class="t dn" style="left:22px;top:33px;width:19px;height:15px;padding-top:6px">16</div><div class="t dn" style="left:42px;top:33px;width:20px;height:15px;padding-top:6px">17</div><div class="b" style="left:64px;top:34px;width:18px;height:14px;background:#fee8a6"></div><div class="t dn" style="left:63px;top:33px;width:20px;height:15px;padding-top:6px">18</div><div class="t dn" style="left:84px;top:33px;width:20px;height:15px;padding-top:6px">19</div><div class="t dn" style="left:105px;top:33px;width:19px;height:15px;padding-top:6px">20</div><div class="t dn" style="left:125px;top:33px;width:19px;height:15px;padding-top:6px">21</div><div class="t dn" style="left:1px;top:49px;width:20px;height:15px;padding-top:6px">22</div><div class="t dn" style="left:22px;top:49px;width:19px;height:15px;padding-top:6px">23</div><div class="t dn" style="left:42px;top:49px;width:20px;height:15px;padding-top:6px">24</div><div class="b" style="left:64px;top:50px;width:18px;height:14px;background:#fee8a6"></div><div class="t dn" style="left:63px;top:49px;width:20px;height:15px;padding-top:6px">25</div><div class="t dn" style="left:84px;top:49px;width:20px;height:15px;padding-top:6px">26</div><div class="t dn" style="left:105px;top:49px;width:19px;height:15px;padding-top:6px">27</div><div class="t dn" style="left:125px;top:49px;width:19px;height:15px;padding-top:6px">28</div><div class="t dn" style="left:1px;top:65px;width:20px;height:15px;padding-top:6px">29</div><div class="t dn" style="left:22px;top:65px;width:19px;height:15px;padding-top:6px">30</div><div class="t dn" style="left:42px;top:65px;width:20px;height:15px;padding-top:6px">31</div><div class="b" style="left:64px;top:66px;width:18px;height:14px;background:#dcdcdc"></div><div class="b" style="left:85px;top:66px;width:18px;height:14px;background:#dcdcdc"></div><div class="b" style="left:106px;top:66px;width:17px;height:14px;background:#dcdcdc"></div><div class="b" style="left:126px;top:66px;width:17px;height:14px;background:#dcdcdc"></div><div class="b" style="left:2px;top:82px;width:18px;height:14px;background:#dcdcdc"></div><div class="b" style="left:23px;top:82px;width:17px;height:14px;background:#dcdcdc"></div><div class="b" style="left:43px;top:82px;width:18px;height:14px;background:#dcdcdc"></div><div class="b" style="left:64px;top:82px;width:18px;height:14px;background:#dcdcdc"></div><div class="b" style="left:85px;top:82px;width:18px;height:14px;background:#dcdcdc"></div><div class="b" style="left:106px;top:82px;width:17px;height:14px;background:#dcdcdc"></div><div class="b" style="left:126px;top:82px;width:17px;height:14px;background:#dcdcdc"></div><div class="b" style="left:0px;top:0;width:1px;height:97px;background:#c4c4c4"></div><div class="b" style="left:21px;top:0;width:1px;height:97px;background:#c4c4c4"></div><div class="b" style="left:41px;top:0;width:1px;height:97px;background:#c4c4c4"></div><div class="b" style="left:62px;top:0;width:1px;height:97px;background:#c4c4c4"></div><div class="b" style="left:83px;top:0;width:1px;height:97px;background:#c4c4c4"></div><div class="b" style="left:104px;top:0;width:1px;height:97px;background:#c4c4c4"></div><div class="b" style="left:124px;top:0;width:1px;height:97px;background:#c4c4c4"></div><div class="b" style="left:144px;top:0;width:1px;height:97px;background:#c4c4c4"></div><div class="b" style="left:0;top:0px;width:145px;height:1px;background:#c4c4c4"></div><div class="b" style="left:0;top:16px;width:145px;height:1px;background:#c4c4c4"></div><div class="b" style="left:0;top:32px;width:145px;height:1px;background:#c4c4c4"></div><div class="b" style="left:0;top:48px;width:145px;height:1px;background:#c4c4c4"></div><div class="b" style="left:0;top:64px;width:145px;height:1px;background:#c4c4c4"></div><div class="b" style="left:0;top:80px;width:145px;height:1px;background:#c4c4c4"></div><div class="b" style="left:0;top:96px;width:145px;height:1px;background:#c4c4c4"></div></div>
<div class="t " style="left:627px;top:692px;font-size:12px;line-height:14px;letter-spacing:-0.3px;">Выбрано дат: 91</div>
<div class="t " style="left:731px;top:692px;font-size:12px;line-height:14px;"><span class="lnk">Очистить только новые</span></div>
<div class="t " style="left:876px;top:692px;font-size:12px;line-height:14px;"><span class="lnk">Очистить все</span></div>
<div class="gbtn" style="left:852px;top:714px;width:70px;height:23px"></div>
<div class="t" style="left:852px;top:720px;width:70px;text-align:center;line-height:14px">Сохранить</div>
<div class="gbtn" style="left:925px;top:714px;width:95px;height:23px"></div>
<div class="t" style="left:925px;top:720px;width:95px;text-align:center;line-height:14px">Предпросмотр</div>
<div class="gbtn" style="left:1023px;top:714px;width:57px;height:23px"></div>
<div class="t" style="left:1023px;top:720px;width:57px;text-align:center;line-height:14px">Закрыть</div></body></html>
